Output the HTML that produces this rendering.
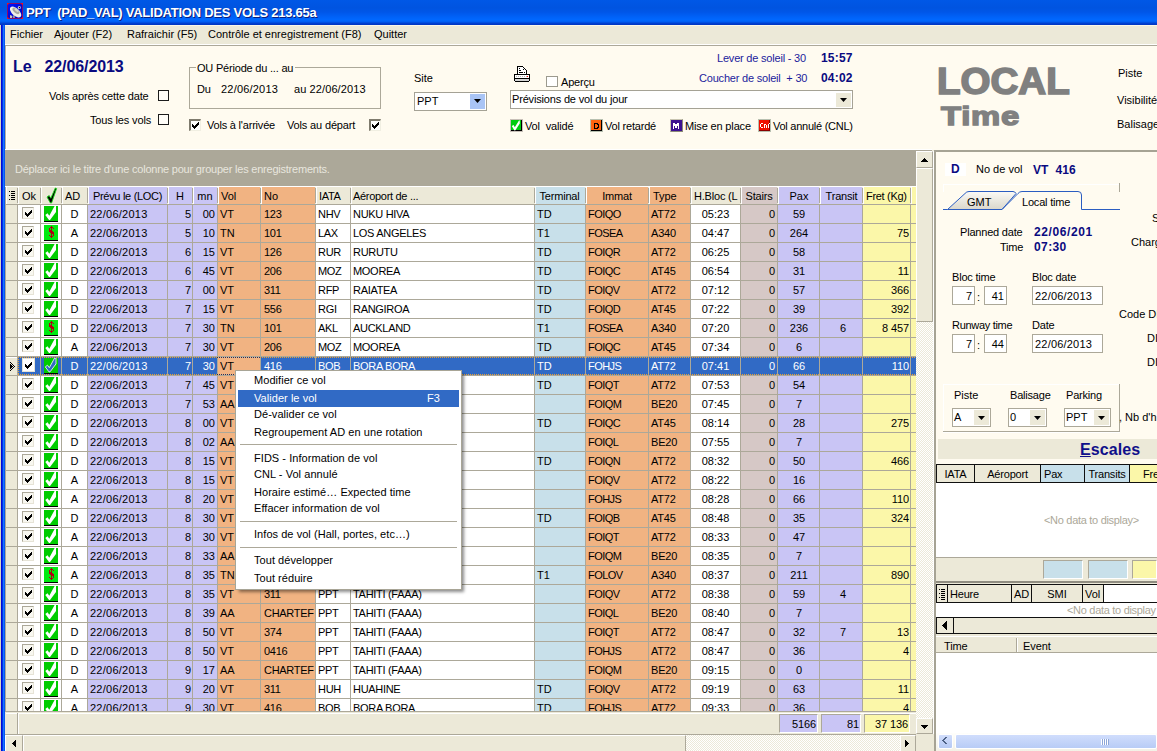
<!DOCTYPE html>
<html><head><meta charset="utf-8"><style>
html,body{margin:0;padding:0;}
body{width:1157px;height:751px;overflow:hidden;position:relative;background:#ECE9D8;font-family:"Liberation Sans",sans-serif;font-size:11px;}
body div{position:absolute;}
.t{white-space:pre;}
</style></head><body>
<div style="left:0px;top:0px;width:1157px;height:25px;background:linear-gradient(to bottom,#0058E6 0px,#0054E0 8px,#0056E8 12px,#0062F8 17px,#0068FF 20px,#005CF0 22px,#0042D4 23px,#0034C0 25px);"></div>
<svg style="position:absolute;left:7px;top:3px" width="16" height="16" viewBox="0 0 16 16"><rect x="0.5" y="0.5" width="15" height="15" fill="#0008E8" stroke="#8A0A6A"/><rect x="1" y="1" width="14" height="14" fill="url(#ig)"/><defs><linearGradient id="ig" x1="0" y1="0" x2="1" y2="1"><stop offset="0" stop-color="#0010FF"/><stop offset="1" stop-color="#0000B8"/></linearGradient></defs><path d="M3 12 L3 15 L5 15 L5.5 13 Z" fill="#C8C8C0"/><path d="M6 12.5 L6 15 L8 15 L7.5 12 Z" fill="#9A9A90"/><ellipse cx="8.6" cy="9" rx="6.9" ry="3.7" transform="rotate(43 8.6 9)" fill="#F0F0E8"/><ellipse cx="9" cy="7.8" rx="4.2" ry="2.2" transform="rotate(40 9 7.8)" fill="#A8A8A0"/><ellipse cx="9.6" cy="7.2" rx="2.6" ry="1.2" transform="rotate(40 9.6 7.2)" fill="#D8D8D0"/><circle cx="12.3" cy="4.5" r="1.5" fill="#E8E8F0"/><circle cx="12.5" cy="4.6" r="0.8" fill="#101010"/><rect x="0" y="0" width="1.5" height="1.5" fill="#FF1010"/><rect x="14.5" y="0" width="1.5" height="1.5" fill="#FF1010"/><rect x="0" y="14.5" width="1.5" height="1.5" fill="#FF1010"/><rect x="14.5" y="14.5" width="1.5" height="1.5" fill="#FF1010"/></svg>
<div class="t" style="left:26px;top:4.70px;font-size:13px;line-height:16px;color:#fff;font-weight:700;letter-spacing:-0.25px;text-shadow:1px 1px 0 #0A1E80;">PPT&nbsp;&nbsp;(PAD_VAL) VALIDATION DES VOLS 213.65a</div>
<div style="left:0px;top:25px;width:1px;height:726px;background:#D8D4C4;"></div>
<div style="left:1px;top:25px;width:1px;height:726px;background:#0008D8;"></div>
<div style="left:2px;top:25px;width:1px;height:726px;background:#0030E6;"></div>
<div style="left:3px;top:25px;width:1px;height:726px;background:#1874FF;"></div>
<div style="left:4px;top:25px;width:1px;height:726px;background:#0656F4;"></div>
<div style="left:5px;top:25px;width:1152px;height:19px;background:#ECE9D8;"></div>
<div style="left:5px;top:25px;width:1152px;height:1px;background:#FBF7E8;"></div>
<div style="left:5px;top:44px;width:1152px;height:1px;background:#FFFFFF;"></div>
<div style="left:5px;top:45px;width:1152px;height:1px;background:#ACA899;"></div>
<div class="t" style="left:10px;top:27.36px;font-size:11px;line-height:14px;color:#000;">Fichier</div>
<div class="t" style="left:54px;top:27.36px;font-size:11px;line-height:14px;color:#000;">Ajouter (F2)</div>
<div class="t" style="left:127px;top:27.36px;font-size:11px;line-height:14px;color:#000;">Rafraichir (F5)</div>
<div class="t" style="left:208px;top:27.36px;font-size:11px;line-height:14px;color:#000;">Contrôle et enregistrement (F8)</div>
<div class="t" style="left:374px;top:27.36px;font-size:11px;line-height:14px;color:#000;">Quitter</div>
<div style="left:5px;top:46px;width:1152px;height:104px;background:#FFFBF0;"></div>
<div style="left:5px;top:46px;width:1px;height:103px;background:#B8B29E;"></div>
<div style="left:6px;top:46px;width:1px;height:103px;background:#FFFFFF;"></div>
<div style="left:5px;top:149px;width:927px;height:1px;background:#FFFFFF;"></div>
<div style="left:5px;top:150px;width:927px;height:1px;background:#ACA899;"></div>
<div class="t" style="left:13px;top:56.71px;font-size:16px;line-height:20px;color:#0A0A80;font-weight:700;letter-spacing:-0.1px;">Le&nbsp;&nbsp;&nbsp;22/06/2013</div>
<div class="t" style="left:49px;top:89.36px;font-size:11px;line-height:14px;color:#000;letter-spacing:-0.15px;">Vols après cette date</div>
<div class="t" style="left:90px;top:113.36px;font-size:11px;line-height:14px;color:#000;letter-spacing:-0.15px;">Tous les vols</div>
<div style="left:158px;top:90px;width:11px;height:11px;border:1px solid #1C1C1C;background:#FFFDF8;box-sizing:border-box;"></div>
<div style="left:158px;top:114px;width:11px;height:11px;border:1px solid #1C1C1C;background:#FFFDF8;box-sizing:border-box;"></div>
<div style="left:189px;top:67px;width:192px;height:42px;border:1px solid #ACA899;box-sizing:border-box;"></div>
<div style="left:196px;top:62px;width:99px;height:10px;background:#FFFBF0;"></div>
<div class="t" style="left:197px;top:61.36px;font-size:11px;line-height:14px;color:#000;letter-spacing:-0.2px;">OU Période du ... au</div>
<div class="t" style="left:197px;top:82.36px;font-size:11px;line-height:14px;color:#000;letter-spacing:-0.1px;">Du</div>
<div class="t" style="left:221px;top:82.36px;font-size:11px;line-height:14px;color:#000;letter-spacing:0.2px;">22/06/2013</div>
<div class="t" style="left:294px;top:82.36px;font-size:11px;line-height:14px;color:#000;letter-spacing:0.1px;">au 22/06/2013</div>
<div style="left:189px;top:119px;width:12px;height:12px;background:#FFFFFF;border-top:2px solid #7F7B6E;border-left:2px solid #7F7B6E;border-right:1px solid #F1EFE2;border-bottom:1px solid #F1EFE2;box-sizing:border-box;"></div>
<svg style="position:absolute;left:192px;top:122px" width="7" height="7" shape-rendering="crispEdges" fill="#000"><rect x="6" y="0" width="1" height="1"/><rect x="5" y="1" width="2" height="1"/><rect x="0" y="2" width="1" height="1"/><rect x="4" y="2" width="3" height="1"/><rect x="0" y="3" width="2" height="1"/><rect x="3" y="3" width="3" height="1"/><rect x="0" y="4" width="5" height="1"/><rect x="1" y="5" width="3" height="1"/><rect x="2" y="6" width="1" height="1"/></svg>
<div class="t" style="left:207px;top:118.36px;font-size:11px;line-height:14px;color:#000;letter-spacing:-0.2px;">Vols à l'arrivée</div>
<div class="t" style="left:287px;top:118.36px;font-size:11px;line-height:14px;color:#000;letter-spacing:-0.15px;">Vols au départ</div>
<div style="left:369px;top:119px;width:12px;height:12px;background:#FFFFFF;border-top:2px solid #7F7B6E;border-left:2px solid #7F7B6E;border-right:1px solid #F1EFE2;border-bottom:1px solid #F1EFE2;box-sizing:border-box;"></div>
<svg style="position:absolute;left:372px;top:122px" width="7" height="7" shape-rendering="crispEdges" fill="#000"><rect x="6" y="0" width="1" height="1"/><rect x="5" y="1" width="2" height="1"/><rect x="0" y="2" width="1" height="1"/><rect x="4" y="2" width="3" height="1"/><rect x="0" y="3" width="2" height="1"/><rect x="3" y="3" width="3" height="1"/><rect x="0" y="4" width="5" height="1"/><rect x="1" y="5" width="3" height="1"/><rect x="2" y="6" width="1" height="1"/></svg>
<div class="t" style="left:414px;top:71.36px;font-size:11px;line-height:14px;color:#000;">Site</div>
<div style="left:414px;top:92px;width:73px;height:19px;border:1px solid #A5A295;background:#fff;box-sizing:border-box;"></div>
<div style="left:470px;top:94px;width:15px;height:15px;background:#A9C4F5;"></div>
<svg style="position:absolute;left:474px;top:99px" width="8" height="5"><path d="M0 0 H7 L3.5 4 Z" fill="#000"/></svg>
<div class="t" style="left:417px;top:94.36px;font-size:11px;line-height:14px;color:#000;">PPT</div>
<svg style="position:absolute;left:514px;top:66px" width="16" height="16" shape-rendering="crispEdges"><rect x="3" y="0" width="1" height="1" fill="#000"/><rect x="4" y="0" width="1" height="1" fill="#000"/><rect x="5" y="0" width="1" height="1" fill="#000"/><rect x="6" y="0" width="1" height="1" fill="#000"/><rect x="7" y="0" width="1" height="1" fill="#000"/><rect x="8" y="0" width="1" height="1" fill="#000"/><rect x="3" y="1" width="1" height="1" fill="#000"/><rect x="4" y="1" width="1" height="1" fill="#fff"/><rect x="5" y="1" width="1" height="1" fill="#fff"/><rect x="6" y="1" width="1" height="1" fill="#fff"/><rect x="7" y="1" width="1" height="1" fill="#fff"/><rect x="8" y="1" width="1" height="1" fill="#fff"/><rect x="9" y="1" width="1" height="1" fill="#000"/><rect x="3" y="2" width="1" height="1" fill="#000"/><rect x="4" y="2" width="1" height="1" fill="#fff"/><rect x="5" y="2" width="1" height="1" fill="#000"/><rect x="6" y="2" width="1" height="1" fill="#fff"/><rect x="7" y="2" width="1" height="1" fill="#fff"/><rect x="8" y="2" width="1" height="1" fill="#fff"/><rect x="9" y="2" width="1" height="1" fill="#fff"/><rect x="10" y="2" width="1" height="1" fill="#000"/><rect x="3" y="3" width="1" height="1" fill="#000"/><rect x="4" y="3" width="1" height="1" fill="#fff"/><rect x="5" y="3" width="1" height="1" fill="#fff"/><rect x="6" y="3" width="1" height="1" fill="#fff"/><rect x="7" y="3" width="1" height="1" fill="#fff"/><rect x="8" y="3" width="1" height="1" fill="#fff"/><rect x="9" y="3" width="1" height="1" fill="#000"/><rect x="10" y="3" width="1" height="1" fill="#fff"/><rect x="11" y="3" width="1" height="1" fill="#000"/><rect x="3" y="4" width="1" height="1" fill="#000"/><rect x="4" y="4" width="1" height="1" fill="#fff"/><rect x="5" y="4" width="1" height="1" fill="#000"/><rect x="6" y="4" width="1" height="1" fill="#000"/><rect x="7" y="4" width="1" height="1" fill="#fff"/><rect x="8" y="4" width="1" height="1" fill="#fff"/><rect x="9" y="4" width="1" height="1" fill="#fff"/><rect x="10" y="4" width="1" height="1" fill="#fff"/><rect x="11" y="4" width="1" height="1" fill="#fff"/><rect x="12" y="4" width="1" height="1" fill="#000"/><rect x="3" y="5" width="1" height="1" fill="#000"/><rect x="4" y="5" width="1" height="1" fill="#fff"/><rect x="5" y="5" width="1" height="1" fill="#fff"/><rect x="6" y="5" width="1" height="1" fill="#fff"/><rect x="7" y="5" width="1" height="1" fill="#fff"/><rect x="8" y="5" width="1" height="1" fill="#fff"/><rect x="9" y="5" width="1" height="1" fill="#fff"/><rect x="10" y="5" width="1" height="1" fill="#fff"/><rect x="11" y="5" width="1" height="1" fill="#fff"/><rect x="12" y="5" width="1" height="1" fill="#000"/><rect x="3" y="6" width="1" height="1" fill="#000"/><rect x="4" y="6" width="1" height="1" fill="#fff"/><rect x="5" y="6" width="1" height="1" fill="#000"/><rect x="6" y="6" width="1" height="1" fill="#000"/><rect x="7" y="6" width="1" height="1" fill="#000"/><rect x="8" y="6" width="1" height="1" fill="#000"/><rect x="9" y="6" width="1" height="1" fill="#fff"/><rect x="10" y="6" width="1" height="1" fill="#000"/><rect x="11" y="6" width="1" height="1" fill="#fff"/><rect x="12" y="6" width="1" height="1" fill="#000"/><rect x="3" y="7" width="1" height="1" fill="#000"/><rect x="4" y="7" width="1" height="1" fill="#fff"/><rect x="5" y="7" width="1" height="1" fill="#fff"/><rect x="6" y="7" width="1" height="1" fill="#fff"/><rect x="7" y="7" width="1" height="1" fill="#fff"/><rect x="8" y="7" width="1" height="1" fill="#fff"/><rect x="9" y="7" width="1" height="1" fill="#fff"/><rect x="10" y="7" width="1" height="1" fill="#fff"/><rect x="11" y="7" width="1" height="1" fill="#fff"/><rect x="12" y="7" width="1" height="1" fill="#000"/><rect x="0" y="8" width="1" height="1" fill="#000"/><rect x="1" y="8" width="1" height="1" fill="#000"/><rect x="2" y="8" width="1" height="1" fill="#000"/><rect x="3" y="8" width="1" height="1" fill="#000"/><rect x="4" y="8" width="1" height="1" fill="#000"/><rect x="5" y="8" width="1" height="1" fill="#000"/><rect x="6" y="8" width="1" height="1" fill="#000"/><rect x="7" y="8" width="1" height="1" fill="#000"/><rect x="8" y="8" width="1" height="1" fill="#000"/><rect x="9" y="8" width="1" height="1" fill="#000"/><rect x="10" y="8" width="1" height="1" fill="#000"/><rect x="11" y="8" width="1" height="1" fill="#000"/><rect x="12" y="8" width="1" height="1" fill="#000"/><rect x="13" y="8" width="1" height="1" fill="#000"/><rect x="14" y="8" width="1" height="1" fill="#000"/><rect x="15" y="8" width="1" height="1" fill="#000"/><rect x="0" y="9" width="1" height="1" fill="#000"/><rect x="1" y="9" width="1" height="1" fill="#fff"/><rect x="2" y="9" width="1" height="1" fill="#fff"/><rect x="3" y="9" width="1" height="1" fill="#fff"/><rect x="4" y="9" width="1" height="1" fill="#fff"/><rect x="5" y="9" width="1" height="1" fill="#fff"/><rect x="6" y="9" width="1" height="1" fill="#fff"/><rect x="7" y="9" width="1" height="1" fill="#fff"/><rect x="8" y="9" width="1" height="1" fill="#fff"/><rect x="9" y="9" width="1" height="1" fill="#fff"/><rect x="10" y="9" width="1" height="1" fill="#fff"/><rect x="11" y="9" width="1" height="1" fill="#fff"/><rect x="12" y="9" width="1" height="1" fill="#fff"/><rect x="13" y="9" width="1" height="1" fill="#fff"/><rect x="14" y="9" width="1" height="1" fill="#fff"/><rect x="15" y="9" width="1" height="1" fill="#000"/><rect x="0" y="10" width="1" height="1" fill="#000"/><rect x="1" y="10" width="1" height="1" fill="#fff"/><rect x="2" y="10" width="1" height="1" fill="#B8B8B8"/><rect x="3" y="10" width="1" height="1" fill="#fff"/><rect x="4" y="10" width="1" height="1" fill="#B8B8B8"/><rect x="5" y="10" width="1" height="1" fill="#fff"/><rect x="6" y="10" width="1" height="1" fill="#B8B8B8"/><rect x="7" y="10" width="1" height="1" fill="#fff"/><rect x="8" y="10" width="1" height="1" fill="#B8B8B8"/><rect x="9" y="10" width="1" height="1" fill="#fff"/><rect x="10" y="10" width="1" height="1" fill="#B8B8B8"/><rect x="11" y="10" width="1" height="1" fill="#fff"/><rect x="12" y="10" width="1" height="1" fill="#B8B8B8"/><rect x="13" y="10" width="1" height="1" fill="#FF0000"/><rect x="14" y="10" width="1" height="1" fill="#fff"/><rect x="15" y="10" width="1" height="1" fill="#000"/><rect x="0" y="11" width="1" height="1" fill="#000"/><rect x="1" y="11" width="1" height="1" fill="#fff"/><rect x="2" y="11" width="1" height="1" fill="#fff"/><rect x="3" y="11" width="1" height="1" fill="#fff"/><rect x="4" y="11" width="1" height="1" fill="#fff"/><rect x="5" y="11" width="1" height="1" fill="#fff"/><rect x="6" y="11" width="1" height="1" fill="#fff"/><rect x="7" y="11" width="1" height="1" fill="#fff"/><rect x="8" y="11" width="1" height="1" fill="#fff"/><rect x="9" y="11" width="1" height="1" fill="#fff"/><rect x="10" y="11" width="1" height="1" fill="#fff"/><rect x="11" y="11" width="1" height="1" fill="#fff"/><rect x="12" y="11" width="1" height="1" fill="#fff"/><rect x="13" y="11" width="1" height="1" fill="#fff"/><rect x="14" y="11" width="1" height="1" fill="#fff"/><rect x="15" y="11" width="1" height="1" fill="#000"/><rect x="0" y="12" width="1" height="1" fill="#000"/><rect x="1" y="12" width="1" height="1" fill="#000"/><rect x="2" y="12" width="1" height="1" fill="#000"/><rect x="3" y="12" width="1" height="1" fill="#000"/><rect x="4" y="12" width="1" height="1" fill="#000"/><rect x="5" y="12" width="1" height="1" fill="#000"/><rect x="6" y="12" width="1" height="1" fill="#000"/><rect x="7" y="12" width="1" height="1" fill="#000"/><rect x="8" y="12" width="1" height="1" fill="#000"/><rect x="9" y="12" width="1" height="1" fill="#000"/><rect x="10" y="12" width="1" height="1" fill="#000"/><rect x="11" y="12" width="1" height="1" fill="#000"/><rect x="12" y="12" width="1" height="1" fill="#000"/><rect x="13" y="12" width="1" height="1" fill="#000"/><rect x="14" y="12" width="1" height="1" fill="#000"/><rect x="15" y="12" width="1" height="1" fill="#000"/><rect x="0" y="13" width="1" height="1" fill="#000"/><rect x="1" y="13" width="1" height="1" fill="#D4D4D4"/><rect x="2" y="13" width="1" height="1" fill="#D4D4D4"/><rect x="3" y="13" width="1" height="1" fill="#D4D4D4"/><rect x="4" y="13" width="1" height="1" fill="#D4D4D4"/><rect x="5" y="13" width="1" height="1" fill="#D4D4D4"/><rect x="6" y="13" width="1" height="1" fill="#D4D4D4"/><rect x="7" y="13" width="1" height="1" fill="#D4D4D4"/><rect x="8" y="13" width="1" height="1" fill="#D4D4D4"/><rect x="9" y="13" width="1" height="1" fill="#D4D4D4"/><rect x="10" y="13" width="1" height="1" fill="#D4D4D4"/><rect x="11" y="13" width="1" height="1" fill="#D4D4D4"/><rect x="12" y="13" width="1" height="1" fill="#D4D4D4"/><rect x="13" y="13" width="1" height="1" fill="#D4D4D4"/><rect x="14" y="13" width="1" height="1" fill="#D4D4D4"/><rect x="15" y="13" width="1" height="1" fill="#000"/><rect x="0" y="14" width="1" height="1" fill="#000"/><rect x="1" y="14" width="1" height="1" fill="#D4D4D4"/><rect x="2" y="14" width="1" height="1" fill="#D4D4D4"/><rect x="3" y="14" width="1" height="1" fill="#D4D4D4"/><rect x="4" y="14" width="1" height="1" fill="#D4D4D4"/><rect x="5" y="14" width="1" height="1" fill="#D4D4D4"/><rect x="6" y="14" width="1" height="1" fill="#D4D4D4"/><rect x="7" y="14" width="1" height="1" fill="#D4D4D4"/><rect x="8" y="14" width="1" height="1" fill="#D4D4D4"/><rect x="9" y="14" width="1" height="1" fill="#D4D4D4"/><rect x="10" y="14" width="1" height="1" fill="#D4D4D4"/><rect x="11" y="14" width="1" height="1" fill="#D4D4D4"/><rect x="12" y="14" width="1" height="1" fill="#D4D4D4"/><rect x="13" y="14" width="1" height="1" fill="#D4D4D4"/><rect x="14" y="14" width="1" height="1" fill="#D4D4D4"/><rect x="15" y="14" width="1" height="1" fill="#000"/><rect x="1" y="15" width="1" height="1" fill="#000"/><rect x="2" y="15" width="1" height="1" fill="#000"/><rect x="3" y="15" width="1" height="1" fill="#000"/><rect x="4" y="15" width="1" height="1" fill="#000"/><rect x="5" y="15" width="1" height="1" fill="#000"/><rect x="6" y="15" width="1" height="1" fill="#000"/><rect x="7" y="15" width="1" height="1" fill="#000"/><rect x="8" y="15" width="1" height="1" fill="#000"/><rect x="9" y="15" width="1" height="1" fill="#000"/><rect x="10" y="15" width="1" height="1" fill="#000"/><rect x="11" y="15" width="1" height="1" fill="#000"/><rect x="12" y="15" width="1" height="1" fill="#000"/><rect x="13" y="15" width="1" height="1" fill="#000"/><rect x="14" y="15" width="1" height="1" fill="#000"/></svg>
<div style="left:546px;top:76px;width:12px;height:11px;border:1px solid #9C9A8E;background:#fff;box-sizing:border-box;"></div>
<div class="t" style="left:561px;top:75.36px;font-size:11px;line-height:14px;color:#000;letter-spacing:-0.2px;">Aperçu</div>
<div style="left:510px;top:90px;width:343px;height:19px;border:1px solid #A5A295;background:#fff;box-sizing:border-box;"></div>
<div style="left:836px;top:93px;width:15px;height:14px;background:#ECE9D8;"></div>
<svg style="position:absolute;left:840px;top:98px" width="8" height="5"><path d="M0 0 H7 L3.5 4 Z" fill="#000"/></svg>
<div class="t" style="left:512px;top:92.36px;font-size:11px;line-height:14px;color:#000;letter-spacing:-0.17px;">Prévisions de vol du jour</div>
<div class="t" style="left:717px;top:51.36px;font-size:11px;line-height:14px;color:#1C1C9C;letter-spacing:-0.2px;">Lever de soleil - 30</div>
<div class="t" style="left:699px;top:71.36px;font-size:11px;line-height:14px;color:#1C1C9C;letter-spacing:-0.2px;">Coucher de soleil&nbsp;&nbsp;+ 30</div>
<div class="t" style="left:821px;top:50.53px;font-size:12px;line-height:15px;color:#0A0A80;font-weight:700;letter-spacing:0.2px;">15:57</div>
<div class="t" style="left:821px;top:70.53px;font-size:12px;line-height:15px;color:#0A0A80;font-weight:700;letter-spacing:0.2px;">04:02</div>
<div style="left:510px;top:119px;width:13px;height:13px;background:#000;border:1px solid #C8C0B8;box-sizing:border-box;"></div>
<div style="left:511px;top:120px;width:10px;height:10px;background:#00CC10;"></div>
<svg style="position:absolute;left:511px;top:120px" width="11" height="11" viewBox="0 0 11 11"><polygon points="0.8,6 2.6,5 3.8,7.2 8,0.5 8.8,0.5 8.8,3.5 4.2,10.5 3.4,10.5" fill="#fff"/></svg>
<div class="t" style="left:525px;top:119.36px;font-size:11px;line-height:14px;color:#000;letter-spacing:-0.15px;">Vol&nbsp;&nbsp;validé</div>
<div style="left:590px;top:119px;width:13px;height:13px;background:#000;border:1px solid #B8C0B0;box-sizing:border-box;"></div>
<div style="left:591px;top:120px;width:10px;height:10px;background:#FF6410;"></div>
<svg style="position:absolute;left:594px;top:123px" width="5" height="6" shape-rendering="crispEdges" fill="#000"><rect x="0" y="0" width="4" height="1"/><rect x="0" y="1" width="1" height="1"/><rect x="3" y="1" width="2" height="1"/><rect x="0" y="2" width="1" height="1"/><rect x="4" y="2" width="1" height="1"/><rect x="0" y="3" width="1" height="1"/><rect x="4" y="3" width="1" height="1"/><rect x="0" y="4" width="1" height="1"/><rect x="3" y="4" width="2" height="1"/><rect x="0" y="5" width="4" height="1"/></svg>
<div class="t" style="left:605px;top:119.36px;font-size:11px;line-height:14px;color:#000;letter-spacing:-0.2px;">Vol retardé</div>
<div style="left:670px;top:119px;width:13px;height:13px;background:#3C1290;border-top:1px solid #C8C4B0;border-left:1px solid #C8C4B0;border-right:1px solid #8C8A78;border-bottom:1px solid #8C8A78;box-sizing:border-box;"></div>
<svg style="position:absolute;left:673px;top:123px" width="6" height="6" shape-rendering="crispEdges" fill="#FFFFFF"><rect x="0" y="0" width="2" height="1"/><rect x="4" y="0" width="2" height="1"/><rect x="0" y="1" width="6" height="1"/><rect x="0" y="2" width="6" height="1"/><rect x="0" y="3" width="1" height="1"/><rect x="2" y="3" width="2" height="1"/><rect x="5" y="3" width="1" height="1"/><rect x="0" y="4" width="1" height="1"/><rect x="2" y="4" width="2" height="1"/><rect x="5" y="4" width="1" height="1"/><rect x="0" y="5" width="1" height="1"/><rect x="5" y="5" width="1" height="1"/></svg>
<div class="t" style="left:685px;top:119.36px;font-size:11px;line-height:14px;color:#000;letter-spacing:-0.15px;">Mise en place</div>
<div style="left:758px;top:119px;width:13px;height:13px;background:#8A0000;border:1px solid #B8C0B0;box-sizing:border-box;"></div>
<div style="left:759px;top:120px;width:10px;height:10px;background:#F01000;"></div>
<svg style="position:absolute;left:760px;top:123px" width="10" height="5" shape-rendering="crispEdges" fill="#FFFFFF"><rect x="1" y="0" width="2" height="1"/><rect x="9" y="0" width="1" height="1"/><rect x="0" y="1" width="1" height="1"/><rect x="4" y="1" width="2" height="1"/><rect x="8" y="1" width="1" height="1"/><rect x="0" y="2" width="1" height="1"/><rect x="4" y="2" width="1" height="1"/><rect x="6" y="2" width="1" height="1"/><rect x="8" y="2" width="1" height="1"/><rect x="0" y="3" width="1" height="1"/><rect x="4" y="3" width="1" height="1"/><rect x="6" y="3" width="1" height="1"/><rect x="8" y="3" width="1" height="1"/><rect x="1" y="4" width="2" height="1"/><rect x="4" y="4" width="1" height="1"/><rect x="6" y="4" width="1" height="1"/><rect x="8" y="4" width="1" height="1"/></svg>
<div class="t" style="left:773px;top:119.36px;font-size:11px;line-height:14px;color:#000;letter-spacing:-0.25px;">Vol annulé (CNL)</div>
<div class="t" style="left:937px;top:59.10px;font-size:36px;line-height:45px;color:#808080;font-weight:700;letter-spacing:0.0px;-webkit-text-stroke:1.6px #808080;transform:scaleX(1.07);transform-origin:0 0;">LOCAL</div>
<div class="t" style="left:941px;top:99.91px;font-size:26px;line-height:32px;color:#808080;font-weight:700;letter-spacing:0.6px;-webkit-text-stroke:1.4px #808080;transform:scaleX(1.26);transform-origin:0 0;">Time</div>
<div class="t" style="left:1118px;top:66.36px;font-size:11px;line-height:14px;color:#000;">Piste</div>
<div class="t" style="left:1117px;top:93.36px;font-size:11px;line-height:14px;color:#000;">Visibilité</div>
<div class="t" style="left:1117px;top:117.36px;font-size:11px;line-height:14px;color:#000;">Balisage</div>
<div style="left:5px;top:151px;width:911px;height:35px;background:#ACA899;"></div>
<div class="t" style="left:15px;top:162.36px;font-size:11px;line-height:14px;color:#E8E6DE;letter-spacing:-0.22px;">Déplacer ici le titre d'une colonne pour grouper les enregistrements.</div>
<div style="left:5px;top:186px;width:911px;height:1px;background:#FFFFFF;"></div>
<div style="left:5px;top:187px;width:1px;height:525px;background:#ACA899;"></div>
<div style="left:6px;top:187px;width:11px;height:17px;background:#ECE9D8;"></div>
<div style="left:6px;top:187px;width:1px;height:17px;background:#FFFFFF;"></div>
<div style="left:17px;top:188px;width:1px;height:15px;background:#ACA899;"></div>
<div style="left:18px;top:187px;width:22px;height:17px;background:#ECE9D8;"></div>
<div style="left:18px;top:187px;width:1px;height:17px;background:#FFFFFF;"></div>
<div style="left:40px;top:188px;width:1px;height:15px;background:#ACA899;"></div>
<div style="left:41px;top:187px;width:20px;height:17px;background:#ECE9D8;"></div>
<div style="left:41px;top:187px;width:1px;height:17px;background:#FFFFFF;"></div>
<div style="left:61px;top:188px;width:1px;height:15px;background:#ACA899;"></div>
<div style="left:62px;top:187px;width:25px;height:17px;background:#ECE9D8;"></div>
<div style="left:62px;top:187px;width:1px;height:17px;background:#FFFFFF;"></div>
<div style="left:87px;top:188px;width:1px;height:15px;background:#ACA899;"></div>
<div style="left:88px;top:187px;width:79px;height:17px;background:#C9C5F5;"></div>
<div style="left:88px;top:187px;width:1px;height:17px;background:#FFFFFF;"></div>
<div style="left:167px;top:188px;width:1px;height:15px;background:#ACA899;"></div>
<div style="left:168px;top:187px;width:24px;height:17px;background:#C9C5F5;"></div>
<div style="left:168px;top:187px;width:1px;height:17px;background:#FFFFFF;"></div>
<div style="left:192px;top:188px;width:1px;height:15px;background:#ACA899;"></div>
<div style="left:193px;top:187px;width:24px;height:17px;background:#C9C5F5;"></div>
<div style="left:193px;top:187px;width:1px;height:17px;background:#FFFFFF;"></div>
<div style="left:217px;top:188px;width:1px;height:15px;background:#ACA899;"></div>
<div style="left:218px;top:187px;width:42px;height:17px;background:#F1B382;"></div>
<div style="left:218px;top:187px;width:1px;height:17px;background:#FFFFFF;"></div>
<div style="left:260px;top:188px;width:1px;height:15px;background:#ACA899;"></div>
<div style="left:261px;top:187px;width:54px;height:17px;background:#F1B382;"></div>
<div style="left:261px;top:187px;width:1px;height:17px;background:#FFFFFF;"></div>
<div style="left:315px;top:188px;width:1px;height:15px;background:#ACA899;"></div>
<div style="left:316px;top:187px;width:34px;height:17px;background:#ECE9D8;"></div>
<div style="left:316px;top:187px;width:1px;height:17px;background:#FFFFFF;"></div>
<div style="left:350px;top:188px;width:1px;height:15px;background:#ACA899;"></div>
<div style="left:351px;top:187px;width:183px;height:17px;background:#ECE9D8;"></div>
<div style="left:351px;top:187px;width:1px;height:17px;background:#FFFFFF;"></div>
<div style="left:534px;top:188px;width:1px;height:15px;background:#ACA899;"></div>
<div style="left:535px;top:187px;width:50px;height:17px;background:#C8E0EA;"></div>
<div style="left:535px;top:187px;width:1px;height:17px;background:#FFFFFF;"></div>
<div style="left:585px;top:188px;width:1px;height:15px;background:#ACA899;"></div>
<div style="left:586px;top:187px;width:62px;height:17px;background:#F1B382;"></div>
<div style="left:586px;top:187px;width:1px;height:17px;background:#FFFFFF;"></div>
<div style="left:648px;top:188px;width:1px;height:15px;background:#ACA899;"></div>
<div style="left:649px;top:187px;width:41px;height:17px;background:#F1B382;"></div>
<div style="left:649px;top:187px;width:1px;height:17px;background:#FFFFFF;"></div>
<div style="left:690px;top:188px;width:1px;height:15px;background:#ACA899;"></div>
<div style="left:691px;top:187px;width:49px;height:17px;background:#ECE9D8;"></div>
<div style="left:691px;top:187px;width:1px;height:17px;background:#FFFFFF;"></div>
<div style="left:740px;top:188px;width:1px;height:15px;background:#ACA899;"></div>
<div style="left:741px;top:187px;width:36px;height:17px;background:#D6C8C6;"></div>
<div style="left:741px;top:187px;width:1px;height:17px;background:#FFFFFF;"></div>
<div style="left:777px;top:188px;width:1px;height:15px;background:#ACA899;"></div>
<div style="left:778px;top:187px;width:41px;height:17px;background:#C9C5F5;"></div>
<div style="left:778px;top:187px;width:1px;height:17px;background:#FFFFFF;"></div>
<div style="left:819px;top:188px;width:1px;height:15px;background:#ACA899;"></div>
<div style="left:820px;top:187px;width:42px;height:17px;background:#C9C5F5;"></div>
<div style="left:820px;top:187px;width:1px;height:17px;background:#FFFFFF;"></div>
<div style="left:862px;top:188px;width:1px;height:15px;background:#ACA899;"></div>
<div style="left:863px;top:187px;width:47px;height:17px;background:#FBF7A9;"></div>
<div style="left:863px;top:187px;width:1px;height:17px;background:#FFFFFF;"></div>
<div style="left:910px;top:188px;width:1px;height:15px;background:#ACA899;"></div>
<div style="left:911px;top:187px;width:5px;height:17px;background:#FBF7A9;"></div>
<div style="left:911px;top:187px;width:1px;height:17px;background:#FFFFFF;"></div>
<div style="left:6px;top:204px;width:910px;height:1px;background:#ACA899;"></div>
<div style="left:6px;top:205px;width:11px;height:506px;background:#ECE9D8;"></div>
<div style="left:18px;top:205px;width:22px;height:506px;background:#fff;"></div>
<div style="left:41px;top:205px;width:20px;height:506px;background:#fff;"></div>
<div style="left:62px;top:205px;width:25px;height:506px;background:#fff;"></div>
<div style="left:88px;top:205px;width:79px;height:506px;background:#C9C5F5;"></div>
<div style="left:168px;top:205px;width:24px;height:506px;background:#C9C5F5;"></div>
<div style="left:193px;top:205px;width:24px;height:506px;background:#C9C5F5;"></div>
<div style="left:218px;top:205px;width:42px;height:506px;background:#F1B382;"></div>
<div style="left:261px;top:205px;width:54px;height:506px;background:#F1B382;"></div>
<div style="left:316px;top:205px;width:34px;height:506px;background:#fff;"></div>
<div style="left:351px;top:205px;width:183px;height:506px;background:#fff;"></div>
<div style="left:535px;top:205px;width:50px;height:506px;background:#C8E0EA;"></div>
<div style="left:586px;top:205px;width:62px;height:506px;background:#F1B382;"></div>
<div style="left:649px;top:205px;width:41px;height:506px;background:#F1B382;"></div>
<div style="left:691px;top:205px;width:49px;height:506px;background:#fff;"></div>
<div style="left:741px;top:205px;width:36px;height:506px;background:#D6C8C6;"></div>
<div style="left:778px;top:205px;width:41px;height:506px;background:#C9C5F5;"></div>
<div style="left:820px;top:205px;width:42px;height:506px;background:#C9C5F5;"></div>
<div style="left:863px;top:205px;width:47px;height:506px;background:#FBF7A9;"></div>
<div style="left:911px;top:205px;width:5px;height:506px;background:#FBF7A9;"></div>
<div style="left:18px;top:357px;width:22px;height:18px;background:#316AC5;"></div>
<div style="left:41px;top:357px;width:20px;height:18px;background:#316AC5;"></div>
<div style="left:62px;top:357px;width:25px;height:18px;background:#316AC5;"></div>
<div style="left:88px;top:357px;width:79px;height:18px;background:#316AC5;"></div>
<div style="left:168px;top:357px;width:24px;height:18px;background:#316AC5;"></div>
<div style="left:193px;top:357px;width:24px;height:18px;background:#316AC5;"></div>
<div style="left:261px;top:357px;width:54px;height:18px;background:#316AC5;"></div>
<div style="left:316px;top:357px;width:34px;height:18px;background:#316AC5;"></div>
<div style="left:351px;top:357px;width:183px;height:18px;background:#316AC5;"></div>
<div style="left:535px;top:357px;width:50px;height:18px;background:#316AC5;"></div>
<div style="left:586px;top:357px;width:62px;height:18px;background:#316AC5;"></div>
<div style="left:649px;top:357px;width:41px;height:18px;background:#316AC5;"></div>
<div style="left:691px;top:357px;width:49px;height:18px;background:#316AC5;"></div>
<div style="left:741px;top:357px;width:36px;height:18px;background:#316AC5;"></div>
<div style="left:778px;top:357px;width:41px;height:18px;background:#316AC5;"></div>
<div style="left:820px;top:357px;width:42px;height:18px;background:#316AC5;"></div>
<div style="left:863px;top:357px;width:47px;height:18px;background:#316AC5;"></div>
<div style="left:911px;top:357px;width:5px;height:18px;background:#316AC5;"></div>
<div style="left:6px;top:223px;width:910px;height:1px;background:#ACA899;"></div>
<div style="left:6px;top:242px;width:910px;height:1px;background:#ACA899;"></div>
<div style="left:6px;top:261px;width:910px;height:1px;background:#ACA899;"></div>
<div style="left:6px;top:280px;width:910px;height:1px;background:#ACA899;"></div>
<div style="left:6px;top:299px;width:910px;height:1px;background:#ACA899;"></div>
<div style="left:6px;top:318px;width:910px;height:1px;background:#ACA899;"></div>
<div style="left:6px;top:337px;width:910px;height:1px;background:#ACA899;"></div>
<div style="left:6px;top:356px;width:910px;height:1px;background:#ACA899;"></div>
<div style="left:6px;top:375px;width:910px;height:1px;background:#ACA899;"></div>
<div style="left:6px;top:394px;width:910px;height:1px;background:#ACA899;"></div>
<div style="left:6px;top:413px;width:910px;height:1px;background:#ACA899;"></div>
<div style="left:6px;top:432px;width:910px;height:1px;background:#ACA899;"></div>
<div style="left:6px;top:451px;width:910px;height:1px;background:#ACA899;"></div>
<div style="left:6px;top:470px;width:910px;height:1px;background:#ACA899;"></div>
<div style="left:6px;top:489px;width:910px;height:1px;background:#ACA899;"></div>
<div style="left:6px;top:508px;width:910px;height:1px;background:#ACA899;"></div>
<div style="left:6px;top:527px;width:910px;height:1px;background:#ACA899;"></div>
<div style="left:6px;top:546px;width:910px;height:1px;background:#ACA899;"></div>
<div style="left:6px;top:565px;width:910px;height:1px;background:#ACA899;"></div>
<div style="left:6px;top:584px;width:910px;height:1px;background:#ACA899;"></div>
<div style="left:6px;top:603px;width:910px;height:1px;background:#ACA899;"></div>
<div style="left:6px;top:622px;width:910px;height:1px;background:#ACA899;"></div>
<div style="left:6px;top:641px;width:910px;height:1px;background:#ACA899;"></div>
<div style="left:6px;top:660px;width:910px;height:1px;background:#ACA899;"></div>
<div style="left:6px;top:679px;width:910px;height:1px;background:#ACA899;"></div>
<div style="left:6px;top:698px;width:910px;height:1px;background:#ACA899;"></div>
<div style="left:17px;top:205px;width:1px;height:506px;background:#ACA899;"></div>
<div style="left:40px;top:205px;width:1px;height:506px;background:#ACA899;"></div>
<div style="left:61px;top:205px;width:1px;height:506px;background:#ACA899;"></div>
<div style="left:87px;top:205px;width:1px;height:506px;background:#ACA899;"></div>
<div style="left:167px;top:205px;width:1px;height:506px;background:#ACA899;"></div>
<div style="left:192px;top:205px;width:1px;height:506px;background:#ACA899;"></div>
<div style="left:217px;top:205px;width:1px;height:506px;background:#ACA899;"></div>
<div style="left:260px;top:205px;width:1px;height:506px;background:#ACA899;"></div>
<div style="left:315px;top:205px;width:1px;height:506px;background:#ACA899;"></div>
<div style="left:350px;top:205px;width:1px;height:506px;background:#ACA899;"></div>
<div style="left:534px;top:205px;width:1px;height:506px;background:#ACA899;"></div>
<div style="left:585px;top:205px;width:1px;height:506px;background:#ACA899;"></div>
<div style="left:648px;top:205px;width:1px;height:506px;background:#ACA899;"></div>
<div style="left:690px;top:205px;width:1px;height:506px;background:#ACA899;"></div>
<div style="left:740px;top:205px;width:1px;height:506px;background:#ACA899;"></div>
<div style="left:777px;top:205px;width:1px;height:506px;background:#ACA899;"></div>
<div style="left:819px;top:205px;width:1px;height:506px;background:#ACA899;"></div>
<div style="left:862px;top:205px;width:1px;height:506px;background:#ACA899;"></div>
<div style="left:910px;top:205px;width:1px;height:506px;background:#ACA899;"></div>
<div style="left:18px;top:357px;width:199px;height:1px;background:repeating-linear-gradient(to right,#E8A038 0px,#E8A038 1px,transparent 1px,transparent 2px);"></div>
<div style="left:18px;top:374px;width:199px;height:1px;background:repeating-linear-gradient(to right,#E8A038 0px,#E8A038 1px,transparent 1px,transparent 2px);"></div>
<div style="left:217px;top:357px;width:43px;height:1px;background:repeating-linear-gradient(to right,#203060 0px,#203060 1px,transparent 1px,transparent 2px);"></div>
<div style="left:217px;top:374px;width:43px;height:1px;background:repeating-linear-gradient(to right,#203060 0px,#203060 1px,transparent 1px,transparent 2px);"></div>
<div style="left:260px;top:357px;width:656px;height:1px;background:repeating-linear-gradient(to right,#E8A038 0px,#E8A038 1px,transparent 1px,transparent 2px);"></div>
<div style="left:260px;top:374px;width:656px;height:1px;background:repeating-linear-gradient(to right,#E8A038 0px,#E8A038 1px,transparent 1px,transparent 2px);"></div>
<div style="left:18px;top:357px;width:1px;height:18px;background:repeating-linear-gradient(to bottom,#E8A038 0px,#E8A038 1px,transparent 1px,transparent 2px);"></div>
<div style="left:6px;top:357px;width:11px;height:1px;background:#fff;"></div>
<div style="left:22px;top:207px;width:12px;height:12px;background:#F8F7F0;border-top:1px solid #ACA899;border-left:1px solid #ACA899;border-right:1px solid #E6E3D6;border-bottom:1px solid #E6E3D6;box-sizing:border-box;"></div>
<svg style="position:absolute;left:25px;top:210px" width="7" height="7" shape-rendering="crispEdges" fill="#000"><rect x="6" y="0" width="1" height="1"/><rect x="5" y="1" width="2" height="1"/><rect x="0" y="2" width="1" height="1"/><rect x="4" y="2" width="3" height="1"/><rect x="0" y="3" width="2" height="1"/><rect x="3" y="3" width="3" height="1"/><rect x="0" y="4" width="5" height="1"/><rect x="1" y="5" width="3" height="1"/><rect x="2" y="6" width="1" height="1"/></svg>
<div style="left:44px;top:206px;width:14px;height:15px;background:#00CC00;"></div>
<div style="left:44px;top:221px;width:14px;height:1px;background:#000;"></div>
<svg style="position:absolute;left:44px;top:206px" width="14" height="15" viewBox="0 0 14 15"><polygon points="1.3,8.9 3.5,7.2 5.3,9.7 10.6,0 12,0 12,5.9 6,13.9 5,13.9" fill="#fff"/></svg>
<div class="t" style="left:62px;top:207.36px;font-size:11px;line-height:14px;color:#000;width:25px;text-align:center;">D</div>
<div class="t" style="left:90px;top:207.36px;font-size:11px;line-height:14px;color:#000;letter-spacing:0.25px;">22/06/2013</div>
<div class="t" style="left:168px;top:207.36px;font-size:11px;line-height:14px;color:#000;width:23px;text-align:right;">5</div>
<div class="t" style="left:193px;top:207.36px;font-size:11px;line-height:14px;color:#000;width:22px;text-align:right;">00</div>
<div class="t" style="left:220px;top:207.36px;font-size:11px;line-height:14px;color:#000;">VT</div>
<div class="t" style="left:264px;top:207.36px;font-size:11px;line-height:14px;color:#000;letter-spacing:-0.3px;">123</div>
<div class="t" style="left:318px;top:207.36px;font-size:11px;line-height:14px;color:#000;letter-spacing:-0.3px;">NHV</div>
<div class="t" style="left:353px;top:207.36px;font-size:11px;line-height:14px;color:#000;letter-spacing:-0.3px;">NUKU HIVA</div>
<div class="t" style="left:537px;top:207.36px;font-size:11px;line-height:14px;color:#000;">TD</div>
<div class="t" style="left:588px;top:207.36px;font-size:11px;line-height:14px;color:#000;letter-spacing:-0.55px;">FOIQO</div>
<div class="t" style="left:651px;top:207.36px;font-size:11px;line-height:14px;color:#000;letter-spacing:-0.2px;">AT72</div>
<div class="t" style="left:691px;top:207.36px;font-size:11px;line-height:14px;color:#000;width:49px;text-align:center;">05:23</div>
<div class="t" style="left:741px;top:207.36px;font-size:11px;line-height:14px;color:#000;width:34px;text-align:right;">0</div>
<div class="t" style="left:778px;top:207.36px;font-size:11px;line-height:14px;color:#000;width:42px;text-align:center;">59</div>
<div class="t" style="left:821px;top:207.36px;font-size:11px;line-height:14px;color:#000;width:44px;text-align:center;"></div>
<div class="t" style="left:863px;top:207.36px;font-size:11px;line-height:14px;color:#000;width:46px;text-align:right;letter-spacing:-0.1px;"></div>
<div style="left:22px;top:226px;width:12px;height:12px;background:#F8F7F0;border-top:1px solid #ACA899;border-left:1px solid #ACA899;border-right:1px solid #E6E3D6;border-bottom:1px solid #E6E3D6;box-sizing:border-box;"></div>
<svg style="position:absolute;left:25px;top:229px" width="7" height="7" shape-rendering="crispEdges" fill="#000"><rect x="6" y="0" width="1" height="1"/><rect x="5" y="1" width="2" height="1"/><rect x="0" y="2" width="1" height="1"/><rect x="4" y="2" width="3" height="1"/><rect x="0" y="3" width="2" height="1"/><rect x="3" y="3" width="3" height="1"/><rect x="0" y="4" width="5" height="1"/><rect x="1" y="5" width="3" height="1"/><rect x="2" y="6" width="1" height="1"/></svg>
<div style="left:44px;top:225px;width:14px;height:15px;background:#00CC00;"></div>
<div style="left:44px;top:240px;width:14px;height:1px;background:#000;"></div>
<div style="left:44px;top:225px;width:14px;height:15px;background:#00EA10;"></div>
<svg style="position:absolute;left:49px;top:226px" width="5" height="12" shape-rendering="crispEdges" fill="#B00010"><rect x="2" y="0" width="1" height="1"/><rect x="1" y="1" width="3" height="1"/><rect x="0" y="2" width="1" height="1"/><rect x="2" y="2" width="1" height="1"/><rect x="4" y="2" width="1" height="1"/><rect x="0" y="3" width="1" height="1"/><rect x="2" y="3" width="1" height="1"/><rect x="0" y="4" width="3" height="1"/><rect x="0" y="5" width="4" height="1"/><rect x="1" y="6" width="4" height="1"/><rect x="2" y="7" width="3" height="1"/><rect x="2" y="8" width="1" height="1"/><rect x="4" y="8" width="1" height="1"/><rect x="0" y="9" width="1" height="1"/><rect x="2" y="9" width="1" height="1"/><rect x="4" y="9" width="1" height="1"/><rect x="1" y="10" width="3" height="1"/><rect x="2" y="11" width="1" height="1"/></svg>
<div class="t" style="left:62px;top:226.36px;font-size:11px;line-height:14px;color:#000;width:25px;text-align:center;">A</div>
<div class="t" style="left:90px;top:226.36px;font-size:11px;line-height:14px;color:#000;letter-spacing:0.25px;">22/06/2013</div>
<div class="t" style="left:168px;top:226.36px;font-size:11px;line-height:14px;color:#000;width:23px;text-align:right;">5</div>
<div class="t" style="left:193px;top:226.36px;font-size:11px;line-height:14px;color:#000;width:22px;text-align:right;">10</div>
<div class="t" style="left:220px;top:226.36px;font-size:11px;line-height:14px;color:#000;">TN</div>
<div class="t" style="left:264px;top:226.36px;font-size:11px;line-height:14px;color:#000;letter-spacing:-0.3px;">101</div>
<div class="t" style="left:318px;top:226.36px;font-size:11px;line-height:14px;color:#000;letter-spacing:-0.3px;">LAX</div>
<div class="t" style="left:353px;top:226.36px;font-size:11px;line-height:14px;color:#000;letter-spacing:-0.3px;">LOS ANGELES</div>
<div class="t" style="left:537px;top:226.36px;font-size:11px;line-height:14px;color:#000;">T1</div>
<div class="t" style="left:588px;top:226.36px;font-size:11px;line-height:14px;color:#000;letter-spacing:-0.55px;">FOSEA</div>
<div class="t" style="left:651px;top:226.36px;font-size:11px;line-height:14px;color:#000;letter-spacing:-0.2px;">A340</div>
<div class="t" style="left:691px;top:226.36px;font-size:11px;line-height:14px;color:#000;width:49px;text-align:center;">04:47</div>
<div class="t" style="left:741px;top:226.36px;font-size:11px;line-height:14px;color:#000;width:34px;text-align:right;">0</div>
<div class="t" style="left:778px;top:226.36px;font-size:11px;line-height:14px;color:#000;width:42px;text-align:center;">264</div>
<div class="t" style="left:821px;top:226.36px;font-size:11px;line-height:14px;color:#000;width:44px;text-align:center;"></div>
<div class="t" style="left:863px;top:226.36px;font-size:11px;line-height:14px;color:#000;width:46px;text-align:right;letter-spacing:-0.1px;">75</div>
<div style="left:22px;top:245px;width:12px;height:12px;background:#F8F7F0;border-top:1px solid #ACA899;border-left:1px solid #ACA899;border-right:1px solid #E6E3D6;border-bottom:1px solid #E6E3D6;box-sizing:border-box;"></div>
<svg style="position:absolute;left:25px;top:248px" width="7" height="7" shape-rendering="crispEdges" fill="#000"><rect x="6" y="0" width="1" height="1"/><rect x="5" y="1" width="2" height="1"/><rect x="0" y="2" width="1" height="1"/><rect x="4" y="2" width="3" height="1"/><rect x="0" y="3" width="2" height="1"/><rect x="3" y="3" width="3" height="1"/><rect x="0" y="4" width="5" height="1"/><rect x="1" y="5" width="3" height="1"/><rect x="2" y="6" width="1" height="1"/></svg>
<div style="left:44px;top:244px;width:14px;height:15px;background:#00CC00;"></div>
<div style="left:44px;top:259px;width:14px;height:1px;background:#000;"></div>
<svg style="position:absolute;left:44px;top:244px" width="14" height="15" viewBox="0 0 14 15"><polygon points="1.3,8.9 3.5,7.2 5.3,9.7 10.6,0 12,0 12,5.9 6,13.9 5,13.9" fill="#fff"/></svg>
<div class="t" style="left:62px;top:245.36px;font-size:11px;line-height:14px;color:#000;width:25px;text-align:center;">D</div>
<div class="t" style="left:90px;top:245.36px;font-size:11px;line-height:14px;color:#000;letter-spacing:0.25px;">22/06/2013</div>
<div class="t" style="left:168px;top:245.36px;font-size:11px;line-height:14px;color:#000;width:23px;text-align:right;">6</div>
<div class="t" style="left:193px;top:245.36px;font-size:11px;line-height:14px;color:#000;width:22px;text-align:right;">15</div>
<div class="t" style="left:220px;top:245.36px;font-size:11px;line-height:14px;color:#000;">VT</div>
<div class="t" style="left:264px;top:245.36px;font-size:11px;line-height:14px;color:#000;letter-spacing:-0.3px;">126</div>
<div class="t" style="left:318px;top:245.36px;font-size:11px;line-height:14px;color:#000;letter-spacing:-0.3px;">RUR</div>
<div class="t" style="left:353px;top:245.36px;font-size:11px;line-height:14px;color:#000;letter-spacing:-0.3px;">RURUTU</div>
<div class="t" style="left:537px;top:245.36px;font-size:11px;line-height:14px;color:#000;">TD</div>
<div class="t" style="left:588px;top:245.36px;font-size:11px;line-height:14px;color:#000;letter-spacing:-0.55px;">FOIQR</div>
<div class="t" style="left:651px;top:245.36px;font-size:11px;line-height:14px;color:#000;letter-spacing:-0.2px;">AT72</div>
<div class="t" style="left:691px;top:245.36px;font-size:11px;line-height:14px;color:#000;width:49px;text-align:center;">06:25</div>
<div class="t" style="left:741px;top:245.36px;font-size:11px;line-height:14px;color:#000;width:34px;text-align:right;">0</div>
<div class="t" style="left:778px;top:245.36px;font-size:11px;line-height:14px;color:#000;width:42px;text-align:center;">58</div>
<div class="t" style="left:821px;top:245.36px;font-size:11px;line-height:14px;color:#000;width:44px;text-align:center;"></div>
<div class="t" style="left:863px;top:245.36px;font-size:11px;line-height:14px;color:#000;width:46px;text-align:right;letter-spacing:-0.1px;"></div>
<div style="left:22px;top:264px;width:12px;height:12px;background:#F8F7F0;border-top:1px solid #ACA899;border-left:1px solid #ACA899;border-right:1px solid #E6E3D6;border-bottom:1px solid #E6E3D6;box-sizing:border-box;"></div>
<svg style="position:absolute;left:25px;top:267px" width="7" height="7" shape-rendering="crispEdges" fill="#000"><rect x="6" y="0" width="1" height="1"/><rect x="5" y="1" width="2" height="1"/><rect x="0" y="2" width="1" height="1"/><rect x="4" y="2" width="3" height="1"/><rect x="0" y="3" width="2" height="1"/><rect x="3" y="3" width="3" height="1"/><rect x="0" y="4" width="5" height="1"/><rect x="1" y="5" width="3" height="1"/><rect x="2" y="6" width="1" height="1"/></svg>
<div style="left:44px;top:263px;width:14px;height:15px;background:#00CC00;"></div>
<div style="left:44px;top:278px;width:14px;height:1px;background:#000;"></div>
<svg style="position:absolute;left:44px;top:263px" width="14" height="15" viewBox="0 0 14 15"><polygon points="1.3,8.9 3.5,7.2 5.3,9.7 10.6,0 12,0 12,5.9 6,13.9 5,13.9" fill="#fff"/></svg>
<div class="t" style="left:62px;top:264.36px;font-size:11px;line-height:14px;color:#000;width:25px;text-align:center;">D</div>
<div class="t" style="left:90px;top:264.36px;font-size:11px;line-height:14px;color:#000;letter-spacing:0.25px;">22/06/2013</div>
<div class="t" style="left:168px;top:264.36px;font-size:11px;line-height:14px;color:#000;width:23px;text-align:right;">6</div>
<div class="t" style="left:193px;top:264.36px;font-size:11px;line-height:14px;color:#000;width:22px;text-align:right;">45</div>
<div class="t" style="left:220px;top:264.36px;font-size:11px;line-height:14px;color:#000;">VT</div>
<div class="t" style="left:264px;top:264.36px;font-size:11px;line-height:14px;color:#000;letter-spacing:-0.3px;">206</div>
<div class="t" style="left:318px;top:264.36px;font-size:11px;line-height:14px;color:#000;letter-spacing:-0.3px;">MOZ</div>
<div class="t" style="left:353px;top:264.36px;font-size:11px;line-height:14px;color:#000;letter-spacing:-0.3px;">MOOREA</div>
<div class="t" style="left:537px;top:264.36px;font-size:11px;line-height:14px;color:#000;">TD</div>
<div class="t" style="left:588px;top:264.36px;font-size:11px;line-height:14px;color:#000;letter-spacing:-0.55px;">FOIQC</div>
<div class="t" style="left:651px;top:264.36px;font-size:11px;line-height:14px;color:#000;letter-spacing:-0.2px;">AT45</div>
<div class="t" style="left:691px;top:264.36px;font-size:11px;line-height:14px;color:#000;width:49px;text-align:center;">06:54</div>
<div class="t" style="left:741px;top:264.36px;font-size:11px;line-height:14px;color:#000;width:34px;text-align:right;">0</div>
<div class="t" style="left:778px;top:264.36px;font-size:11px;line-height:14px;color:#000;width:42px;text-align:center;">31</div>
<div class="t" style="left:821px;top:264.36px;font-size:11px;line-height:14px;color:#000;width:44px;text-align:center;"></div>
<div class="t" style="left:863px;top:264.36px;font-size:11px;line-height:14px;color:#000;width:46px;text-align:right;letter-spacing:-0.1px;">11</div>
<div style="left:22px;top:283px;width:12px;height:12px;background:#F8F7F0;border-top:1px solid #ACA899;border-left:1px solid #ACA899;border-right:1px solid #E6E3D6;border-bottom:1px solid #E6E3D6;box-sizing:border-box;"></div>
<svg style="position:absolute;left:25px;top:286px" width="7" height="7" shape-rendering="crispEdges" fill="#000"><rect x="6" y="0" width="1" height="1"/><rect x="5" y="1" width="2" height="1"/><rect x="0" y="2" width="1" height="1"/><rect x="4" y="2" width="3" height="1"/><rect x="0" y="3" width="2" height="1"/><rect x="3" y="3" width="3" height="1"/><rect x="0" y="4" width="5" height="1"/><rect x="1" y="5" width="3" height="1"/><rect x="2" y="6" width="1" height="1"/></svg>
<div style="left:44px;top:282px;width:14px;height:15px;background:#00CC00;"></div>
<div style="left:44px;top:297px;width:14px;height:1px;background:#000;"></div>
<svg style="position:absolute;left:44px;top:282px" width="14" height="15" viewBox="0 0 14 15"><polygon points="1.3,8.9 3.5,7.2 5.3,9.7 10.6,0 12,0 12,5.9 6,13.9 5,13.9" fill="#fff"/></svg>
<div class="t" style="left:62px;top:283.36px;font-size:11px;line-height:14px;color:#000;width:25px;text-align:center;">D</div>
<div class="t" style="left:90px;top:283.36px;font-size:11px;line-height:14px;color:#000;letter-spacing:0.25px;">22/06/2013</div>
<div class="t" style="left:168px;top:283.36px;font-size:11px;line-height:14px;color:#000;width:23px;text-align:right;">7</div>
<div class="t" style="left:193px;top:283.36px;font-size:11px;line-height:14px;color:#000;width:22px;text-align:right;">00</div>
<div class="t" style="left:220px;top:283.36px;font-size:11px;line-height:14px;color:#000;">VT</div>
<div class="t" style="left:264px;top:283.36px;font-size:11px;line-height:14px;color:#000;letter-spacing:-0.3px;">311</div>
<div class="t" style="left:318px;top:283.36px;font-size:11px;line-height:14px;color:#000;letter-spacing:-0.3px;">RFP</div>
<div class="t" style="left:353px;top:283.36px;font-size:11px;line-height:14px;color:#000;letter-spacing:-0.3px;">RAIATEA</div>
<div class="t" style="left:537px;top:283.36px;font-size:11px;line-height:14px;color:#000;">TD</div>
<div class="t" style="left:588px;top:283.36px;font-size:11px;line-height:14px;color:#000;letter-spacing:-0.55px;">FOIQV</div>
<div class="t" style="left:651px;top:283.36px;font-size:11px;line-height:14px;color:#000;letter-spacing:-0.2px;">AT72</div>
<div class="t" style="left:691px;top:283.36px;font-size:11px;line-height:14px;color:#000;width:49px;text-align:center;">07:12</div>
<div class="t" style="left:741px;top:283.36px;font-size:11px;line-height:14px;color:#000;width:34px;text-align:right;">0</div>
<div class="t" style="left:778px;top:283.36px;font-size:11px;line-height:14px;color:#000;width:42px;text-align:center;">57</div>
<div class="t" style="left:821px;top:283.36px;font-size:11px;line-height:14px;color:#000;width:44px;text-align:center;"></div>
<div class="t" style="left:863px;top:283.36px;font-size:11px;line-height:14px;color:#000;width:46px;text-align:right;letter-spacing:-0.1px;">366</div>
<div style="left:22px;top:302px;width:12px;height:12px;background:#F8F7F0;border-top:1px solid #ACA899;border-left:1px solid #ACA899;border-right:1px solid #E6E3D6;border-bottom:1px solid #E6E3D6;box-sizing:border-box;"></div>
<svg style="position:absolute;left:25px;top:305px" width="7" height="7" shape-rendering="crispEdges" fill="#000"><rect x="6" y="0" width="1" height="1"/><rect x="5" y="1" width="2" height="1"/><rect x="0" y="2" width="1" height="1"/><rect x="4" y="2" width="3" height="1"/><rect x="0" y="3" width="2" height="1"/><rect x="3" y="3" width="3" height="1"/><rect x="0" y="4" width="5" height="1"/><rect x="1" y="5" width="3" height="1"/><rect x="2" y="6" width="1" height="1"/></svg>
<div style="left:44px;top:301px;width:14px;height:15px;background:#00CC00;"></div>
<div style="left:44px;top:316px;width:14px;height:1px;background:#000;"></div>
<svg style="position:absolute;left:44px;top:301px" width="14" height="15" viewBox="0 0 14 15"><polygon points="1.3,8.9 3.5,7.2 5.3,9.7 10.6,0 12,0 12,5.9 6,13.9 5,13.9" fill="#fff"/></svg>
<div class="t" style="left:62px;top:302.36px;font-size:11px;line-height:14px;color:#000;width:25px;text-align:center;">D</div>
<div class="t" style="left:90px;top:302.36px;font-size:11px;line-height:14px;color:#000;letter-spacing:0.25px;">22/06/2013</div>
<div class="t" style="left:168px;top:302.36px;font-size:11px;line-height:14px;color:#000;width:23px;text-align:right;">7</div>
<div class="t" style="left:193px;top:302.36px;font-size:11px;line-height:14px;color:#000;width:22px;text-align:right;">15</div>
<div class="t" style="left:220px;top:302.36px;font-size:11px;line-height:14px;color:#000;">VT</div>
<div class="t" style="left:264px;top:302.36px;font-size:11px;line-height:14px;color:#000;letter-spacing:-0.3px;">556</div>
<div class="t" style="left:318px;top:302.36px;font-size:11px;line-height:14px;color:#000;letter-spacing:-0.3px;">RGI</div>
<div class="t" style="left:353px;top:302.36px;font-size:11px;line-height:14px;color:#000;letter-spacing:-0.3px;">RANGIROA</div>
<div class="t" style="left:537px;top:302.36px;font-size:11px;line-height:14px;color:#000;">TD</div>
<div class="t" style="left:588px;top:302.36px;font-size:11px;line-height:14px;color:#000;letter-spacing:-0.55px;">FOIQD</div>
<div class="t" style="left:651px;top:302.36px;font-size:11px;line-height:14px;color:#000;letter-spacing:-0.2px;">AT45</div>
<div class="t" style="left:691px;top:302.36px;font-size:11px;line-height:14px;color:#000;width:49px;text-align:center;">07:22</div>
<div class="t" style="left:741px;top:302.36px;font-size:11px;line-height:14px;color:#000;width:34px;text-align:right;">0</div>
<div class="t" style="left:778px;top:302.36px;font-size:11px;line-height:14px;color:#000;width:42px;text-align:center;">39</div>
<div class="t" style="left:821px;top:302.36px;font-size:11px;line-height:14px;color:#000;width:44px;text-align:center;"></div>
<div class="t" style="left:863px;top:302.36px;font-size:11px;line-height:14px;color:#000;width:46px;text-align:right;letter-spacing:-0.1px;">392</div>
<div style="left:22px;top:321px;width:12px;height:12px;background:#F8F7F0;border-top:1px solid #ACA899;border-left:1px solid #ACA899;border-right:1px solid #E6E3D6;border-bottom:1px solid #E6E3D6;box-sizing:border-box;"></div>
<svg style="position:absolute;left:25px;top:324px" width="7" height="7" shape-rendering="crispEdges" fill="#000"><rect x="6" y="0" width="1" height="1"/><rect x="5" y="1" width="2" height="1"/><rect x="0" y="2" width="1" height="1"/><rect x="4" y="2" width="3" height="1"/><rect x="0" y="3" width="2" height="1"/><rect x="3" y="3" width="3" height="1"/><rect x="0" y="4" width="5" height="1"/><rect x="1" y="5" width="3" height="1"/><rect x="2" y="6" width="1" height="1"/></svg>
<div style="left:44px;top:320px;width:14px;height:15px;background:#00CC00;"></div>
<div style="left:44px;top:335px;width:14px;height:1px;background:#000;"></div>
<div style="left:44px;top:320px;width:14px;height:15px;background:#00EA10;"></div>
<svg style="position:absolute;left:49px;top:321px" width="5" height="12" shape-rendering="crispEdges" fill="#B00010"><rect x="2" y="0" width="1" height="1"/><rect x="1" y="1" width="3" height="1"/><rect x="0" y="2" width="1" height="1"/><rect x="2" y="2" width="1" height="1"/><rect x="4" y="2" width="1" height="1"/><rect x="0" y="3" width="1" height="1"/><rect x="2" y="3" width="1" height="1"/><rect x="0" y="4" width="3" height="1"/><rect x="0" y="5" width="4" height="1"/><rect x="1" y="6" width="4" height="1"/><rect x="2" y="7" width="3" height="1"/><rect x="2" y="8" width="1" height="1"/><rect x="4" y="8" width="1" height="1"/><rect x="0" y="9" width="1" height="1"/><rect x="2" y="9" width="1" height="1"/><rect x="4" y="9" width="1" height="1"/><rect x="1" y="10" width="3" height="1"/><rect x="2" y="11" width="1" height="1"/></svg>
<div class="t" style="left:62px;top:321.36px;font-size:11px;line-height:14px;color:#000;width:25px;text-align:center;">D</div>
<div class="t" style="left:90px;top:321.36px;font-size:11px;line-height:14px;color:#000;letter-spacing:0.25px;">22/06/2013</div>
<div class="t" style="left:168px;top:321.36px;font-size:11px;line-height:14px;color:#000;width:23px;text-align:right;">7</div>
<div class="t" style="left:193px;top:321.36px;font-size:11px;line-height:14px;color:#000;width:22px;text-align:right;">30</div>
<div class="t" style="left:220px;top:321.36px;font-size:11px;line-height:14px;color:#000;">TN</div>
<div class="t" style="left:264px;top:321.36px;font-size:11px;line-height:14px;color:#000;letter-spacing:-0.3px;">101</div>
<div class="t" style="left:318px;top:321.36px;font-size:11px;line-height:14px;color:#000;letter-spacing:-0.3px;">AKL</div>
<div class="t" style="left:353px;top:321.36px;font-size:11px;line-height:14px;color:#000;letter-spacing:-0.3px;">AUCKLAND</div>
<div class="t" style="left:537px;top:321.36px;font-size:11px;line-height:14px;color:#000;">T1</div>
<div class="t" style="left:588px;top:321.36px;font-size:11px;line-height:14px;color:#000;letter-spacing:-0.55px;">FOSEA</div>
<div class="t" style="left:651px;top:321.36px;font-size:11px;line-height:14px;color:#000;letter-spacing:-0.2px;">A340</div>
<div class="t" style="left:691px;top:321.36px;font-size:11px;line-height:14px;color:#000;width:49px;text-align:center;">07:20</div>
<div class="t" style="left:741px;top:321.36px;font-size:11px;line-height:14px;color:#000;width:34px;text-align:right;">0</div>
<div class="t" style="left:778px;top:321.36px;font-size:11px;line-height:14px;color:#000;width:42px;text-align:center;">236</div>
<div class="t" style="left:821px;top:321.36px;font-size:11px;line-height:14px;color:#000;width:44px;text-align:center;">6</div>
<div class="t" style="left:863px;top:321.36px;font-size:11px;line-height:14px;color:#000;width:46px;text-align:right;letter-spacing:-0.1px;">8 457</div>
<div style="left:22px;top:340px;width:12px;height:12px;background:#F8F7F0;border-top:1px solid #ACA899;border-left:1px solid #ACA899;border-right:1px solid #E6E3D6;border-bottom:1px solid #E6E3D6;box-sizing:border-box;"></div>
<svg style="position:absolute;left:25px;top:343px" width="7" height="7" shape-rendering="crispEdges" fill="#000"><rect x="6" y="0" width="1" height="1"/><rect x="5" y="1" width="2" height="1"/><rect x="0" y="2" width="1" height="1"/><rect x="4" y="2" width="3" height="1"/><rect x="0" y="3" width="2" height="1"/><rect x="3" y="3" width="3" height="1"/><rect x="0" y="4" width="5" height="1"/><rect x="1" y="5" width="3" height="1"/><rect x="2" y="6" width="1" height="1"/></svg>
<div style="left:44px;top:339px;width:14px;height:15px;background:#00CC00;"></div>
<div style="left:44px;top:354px;width:14px;height:1px;background:#000;"></div>
<svg style="position:absolute;left:44px;top:339px" width="14" height="15" viewBox="0 0 14 15"><polygon points="1.3,8.9 3.5,7.2 5.3,9.7 10.6,0 12,0 12,5.9 6,13.9 5,13.9" fill="#fff"/></svg>
<div class="t" style="left:62px;top:340.36px;font-size:11px;line-height:14px;color:#000;width:25px;text-align:center;">A</div>
<div class="t" style="left:90px;top:340.36px;font-size:11px;line-height:14px;color:#000;letter-spacing:0.25px;">22/06/2013</div>
<div class="t" style="left:168px;top:340.36px;font-size:11px;line-height:14px;color:#000;width:23px;text-align:right;">7</div>
<div class="t" style="left:193px;top:340.36px;font-size:11px;line-height:14px;color:#000;width:22px;text-align:right;">30</div>
<div class="t" style="left:220px;top:340.36px;font-size:11px;line-height:14px;color:#000;">VT</div>
<div class="t" style="left:264px;top:340.36px;font-size:11px;line-height:14px;color:#000;letter-spacing:-0.3px;">206</div>
<div class="t" style="left:318px;top:340.36px;font-size:11px;line-height:14px;color:#000;letter-spacing:-0.3px;">MOZ</div>
<div class="t" style="left:353px;top:340.36px;font-size:11px;line-height:14px;color:#000;letter-spacing:-0.3px;">MOOREA</div>
<div class="t" style="left:537px;top:340.36px;font-size:11px;line-height:14px;color:#000;">TD</div>
<div class="t" style="left:588px;top:340.36px;font-size:11px;line-height:14px;color:#000;letter-spacing:-0.55px;">FOIQC</div>
<div class="t" style="left:651px;top:340.36px;font-size:11px;line-height:14px;color:#000;letter-spacing:-0.2px;">AT45</div>
<div class="t" style="left:691px;top:340.36px;font-size:11px;line-height:14px;color:#000;width:49px;text-align:center;">07:34</div>
<div class="t" style="left:741px;top:340.36px;font-size:11px;line-height:14px;color:#000;width:34px;text-align:right;">0</div>
<div class="t" style="left:778px;top:340.36px;font-size:11px;line-height:14px;color:#000;width:42px;text-align:center;">6</div>
<div class="t" style="left:821px;top:340.36px;font-size:11px;line-height:14px;color:#000;width:44px;text-align:center;"></div>
<div class="t" style="left:863px;top:340.36px;font-size:11px;line-height:14px;color:#000;width:46px;text-align:right;letter-spacing:-0.1px;"></div>
<div style="left:22px;top:358px;width:13px;height:14px;background:#FFFFFF;border:1px solid #E6E3D6;box-sizing:border-box;"></div>
<svg style="position:absolute;left:25px;top:362px" width="7" height="7" shape-rendering="crispEdges" fill="#000"><rect x="6" y="0" width="1" height="1"/><rect x="5" y="1" width="2" height="1"/><rect x="0" y="2" width="1" height="1"/><rect x="4" y="2" width="3" height="1"/><rect x="0" y="3" width="2" height="1"/><rect x="3" y="3" width="3" height="1"/><rect x="0" y="4" width="5" height="1"/><rect x="1" y="5" width="3" height="1"/><rect x="2" y="6" width="1" height="1"/></svg>
<div style="left:44px;top:358px;width:14px;height:15px;background:#00CC00;"></div>
<div style="left:44px;top:373px;width:14px;height:1px;background:#000;"></div>
<svg style="position:absolute;left:44px;top:358px" width="14" height="15" viewBox="0 0 14 15"><polygon points="1.3,8.9 3.5,7.2 5.3,9.7 10.6,0 12,0 12,5.9 6,13.9 5,13.9" fill="#316AC5" stroke="#fff" stroke-width="0.8"/></svg>
<div class="t" style="left:62px;top:359.36px;font-size:11px;line-height:14px;color:#fff;width:25px;text-align:center;">D</div>
<div class="t" style="left:90px;top:359.36px;font-size:11px;line-height:14px;color:#fff;letter-spacing:0.25px;">22/06/2013</div>
<div class="t" style="left:168px;top:359.36px;font-size:11px;line-height:14px;color:#fff;width:23px;text-align:right;">7</div>
<div class="t" style="left:193px;top:359.36px;font-size:11px;line-height:14px;color:#fff;width:22px;text-align:right;">30</div>
<div class="t" style="left:220px;top:359.36px;font-size:11px;line-height:14px;color:#000;">VT</div>
<div class="t" style="left:264px;top:359.36px;font-size:11px;line-height:14px;color:#fff;letter-spacing:-0.3px;">416</div>
<div class="t" style="left:318px;top:359.36px;font-size:11px;line-height:14px;color:#fff;letter-spacing:-0.3px;">BOB</div>
<div class="t" style="left:353px;top:359.36px;font-size:11px;line-height:14px;color:#fff;letter-spacing:-0.3px;">BORA BORA</div>
<div class="t" style="left:537px;top:359.36px;font-size:11px;line-height:14px;color:#fff;">TD</div>
<div class="t" style="left:588px;top:359.36px;font-size:11px;line-height:14px;color:#fff;letter-spacing:-0.55px;">FOHJS</div>
<div class="t" style="left:651px;top:359.36px;font-size:11px;line-height:14px;color:#fff;letter-spacing:-0.2px;">AT72</div>
<div class="t" style="left:691px;top:359.36px;font-size:11px;line-height:14px;color:#fff;width:49px;text-align:center;">07:41</div>
<div class="t" style="left:741px;top:359.36px;font-size:11px;line-height:14px;color:#fff;width:34px;text-align:right;">0</div>
<div class="t" style="left:778px;top:359.36px;font-size:11px;line-height:14px;color:#fff;width:42px;text-align:center;">66</div>
<div class="t" style="left:821px;top:359.36px;font-size:11px;line-height:14px;color:#fff;width:44px;text-align:center;"></div>
<div class="t" style="left:863px;top:359.36px;font-size:11px;line-height:14px;color:#fff;width:46px;text-align:right;letter-spacing:-0.1px;">110</div>
<div style="left:22px;top:378px;width:12px;height:12px;background:#F8F7F0;border-top:1px solid #ACA899;border-left:1px solid #ACA899;border-right:1px solid #E6E3D6;border-bottom:1px solid #E6E3D6;box-sizing:border-box;"></div>
<svg style="position:absolute;left:25px;top:381px" width="7" height="7" shape-rendering="crispEdges" fill="#000"><rect x="6" y="0" width="1" height="1"/><rect x="5" y="1" width="2" height="1"/><rect x="0" y="2" width="1" height="1"/><rect x="4" y="2" width="3" height="1"/><rect x="0" y="3" width="2" height="1"/><rect x="3" y="3" width="3" height="1"/><rect x="0" y="4" width="5" height="1"/><rect x="1" y="5" width="3" height="1"/><rect x="2" y="6" width="1" height="1"/></svg>
<div style="left:44px;top:377px;width:14px;height:15px;background:#00CC00;"></div>
<div style="left:44px;top:392px;width:14px;height:1px;background:#000;"></div>
<svg style="position:absolute;left:44px;top:377px" width="14" height="15" viewBox="0 0 14 15"><polygon points="1.3,8.9 3.5,7.2 5.3,9.7 10.6,0 12,0 12,5.9 6,13.9 5,13.9" fill="#fff"/></svg>
<div class="t" style="left:62px;top:378.36px;font-size:11px;line-height:14px;color:#000;width:25px;text-align:center;">D</div>
<div class="t" style="left:90px;top:378.36px;font-size:11px;line-height:14px;color:#000;letter-spacing:0.25px;">22/06/2013</div>
<div class="t" style="left:168px;top:378.36px;font-size:11px;line-height:14px;color:#000;width:23px;text-align:right;">7</div>
<div class="t" style="left:193px;top:378.36px;font-size:11px;line-height:14px;color:#000;width:22px;text-align:right;">45</div>
<div class="t" style="left:220px;top:378.36px;font-size:11px;line-height:14px;color:#000;">VT</div>
<div class="t" style="left:264px;top:378.36px;font-size:11px;line-height:14px;color:#000;letter-spacing:-0.3px;"></div>
<div class="t" style="left:318px;top:378.36px;font-size:11px;line-height:14px;color:#000;letter-spacing:-0.3px;"></div>
<div class="t" style="left:353px;top:378.36px;font-size:11px;line-height:14px;color:#000;letter-spacing:-0.3px;"></div>
<div class="t" style="left:537px;top:378.36px;font-size:11px;line-height:14px;color:#000;">TD</div>
<div class="t" style="left:588px;top:378.36px;font-size:11px;line-height:14px;color:#000;letter-spacing:-0.55px;">FOIQT</div>
<div class="t" style="left:651px;top:378.36px;font-size:11px;line-height:14px;color:#000;letter-spacing:-0.2px;">AT72</div>
<div class="t" style="left:691px;top:378.36px;font-size:11px;line-height:14px;color:#000;width:49px;text-align:center;">07:53</div>
<div class="t" style="left:741px;top:378.36px;font-size:11px;line-height:14px;color:#000;width:34px;text-align:right;">0</div>
<div class="t" style="left:778px;top:378.36px;font-size:11px;line-height:14px;color:#000;width:42px;text-align:center;">54</div>
<div class="t" style="left:821px;top:378.36px;font-size:11px;line-height:14px;color:#000;width:44px;text-align:center;"></div>
<div class="t" style="left:863px;top:378.36px;font-size:11px;line-height:14px;color:#000;width:46px;text-align:right;letter-spacing:-0.1px;"></div>
<div style="left:22px;top:397px;width:12px;height:12px;background:#F8F7F0;border-top:1px solid #ACA899;border-left:1px solid #ACA899;border-right:1px solid #E6E3D6;border-bottom:1px solid #E6E3D6;box-sizing:border-box;"></div>
<svg style="position:absolute;left:25px;top:400px" width="7" height="7" shape-rendering="crispEdges" fill="#000"><rect x="6" y="0" width="1" height="1"/><rect x="5" y="1" width="2" height="1"/><rect x="0" y="2" width="1" height="1"/><rect x="4" y="2" width="3" height="1"/><rect x="0" y="3" width="2" height="1"/><rect x="3" y="3" width="3" height="1"/><rect x="0" y="4" width="5" height="1"/><rect x="1" y="5" width="3" height="1"/><rect x="2" y="6" width="1" height="1"/></svg>
<div style="left:44px;top:396px;width:14px;height:15px;background:#00CC00;"></div>
<div style="left:44px;top:411px;width:14px;height:1px;background:#000;"></div>
<svg style="position:absolute;left:44px;top:396px" width="14" height="15" viewBox="0 0 14 15"><polygon points="1.3,8.9 3.5,7.2 5.3,9.7 10.6,0 12,0 12,5.9 6,13.9 5,13.9" fill="#fff"/></svg>
<div class="t" style="left:62px;top:397.36px;font-size:11px;line-height:14px;color:#000;width:25px;text-align:center;">D</div>
<div class="t" style="left:90px;top:397.36px;font-size:11px;line-height:14px;color:#000;letter-spacing:0.25px;">22/06/2013</div>
<div class="t" style="left:168px;top:397.36px;font-size:11px;line-height:14px;color:#000;width:23px;text-align:right;">7</div>
<div class="t" style="left:193px;top:397.36px;font-size:11px;line-height:14px;color:#000;width:22px;text-align:right;">53</div>
<div class="t" style="left:220px;top:397.36px;font-size:11px;line-height:14px;color:#000;">AA</div>
<div class="t" style="left:264px;top:397.36px;font-size:11px;line-height:14px;color:#000;letter-spacing:-0.3px;"></div>
<div class="t" style="left:318px;top:397.36px;font-size:11px;line-height:14px;color:#000;letter-spacing:-0.3px;"></div>
<div class="t" style="left:353px;top:397.36px;font-size:11px;line-height:14px;color:#000;letter-spacing:-0.3px;"></div>
<div class="t" style="left:537px;top:397.36px;font-size:11px;line-height:14px;color:#000;"></div>
<div class="t" style="left:588px;top:397.36px;font-size:11px;line-height:14px;color:#000;letter-spacing:-0.55px;">FOIQM</div>
<div class="t" style="left:651px;top:397.36px;font-size:11px;line-height:14px;color:#000;letter-spacing:-0.2px;">BE20</div>
<div class="t" style="left:691px;top:397.36px;font-size:11px;line-height:14px;color:#000;width:49px;text-align:center;">07:45</div>
<div class="t" style="left:741px;top:397.36px;font-size:11px;line-height:14px;color:#000;width:34px;text-align:right;">0</div>
<div class="t" style="left:778px;top:397.36px;font-size:11px;line-height:14px;color:#000;width:42px;text-align:center;">7</div>
<div class="t" style="left:821px;top:397.36px;font-size:11px;line-height:14px;color:#000;width:44px;text-align:center;"></div>
<div class="t" style="left:863px;top:397.36px;font-size:11px;line-height:14px;color:#000;width:46px;text-align:right;letter-spacing:-0.1px;"></div>
<div style="left:22px;top:416px;width:12px;height:12px;background:#F8F7F0;border-top:1px solid #ACA899;border-left:1px solid #ACA899;border-right:1px solid #E6E3D6;border-bottom:1px solid #E6E3D6;box-sizing:border-box;"></div>
<svg style="position:absolute;left:25px;top:419px" width="7" height="7" shape-rendering="crispEdges" fill="#000"><rect x="6" y="0" width="1" height="1"/><rect x="5" y="1" width="2" height="1"/><rect x="0" y="2" width="1" height="1"/><rect x="4" y="2" width="3" height="1"/><rect x="0" y="3" width="2" height="1"/><rect x="3" y="3" width="3" height="1"/><rect x="0" y="4" width="5" height="1"/><rect x="1" y="5" width="3" height="1"/><rect x="2" y="6" width="1" height="1"/></svg>
<div style="left:44px;top:415px;width:14px;height:15px;background:#00CC00;"></div>
<div style="left:44px;top:430px;width:14px;height:1px;background:#000;"></div>
<svg style="position:absolute;left:44px;top:415px" width="14" height="15" viewBox="0 0 14 15"><polygon points="1.3,8.9 3.5,7.2 5.3,9.7 10.6,0 12,0 12,5.9 6,13.9 5,13.9" fill="#fff"/></svg>
<div class="t" style="left:62px;top:416.36px;font-size:11px;line-height:14px;color:#000;width:25px;text-align:center;">D</div>
<div class="t" style="left:90px;top:416.36px;font-size:11px;line-height:14px;color:#000;letter-spacing:0.25px;">22/06/2013</div>
<div class="t" style="left:168px;top:416.36px;font-size:11px;line-height:14px;color:#000;width:23px;text-align:right;">8</div>
<div class="t" style="left:193px;top:416.36px;font-size:11px;line-height:14px;color:#000;width:22px;text-align:right;">00</div>
<div class="t" style="left:220px;top:416.36px;font-size:11px;line-height:14px;color:#000;">VT</div>
<div class="t" style="left:264px;top:416.36px;font-size:11px;line-height:14px;color:#000;letter-spacing:-0.3px;"></div>
<div class="t" style="left:318px;top:416.36px;font-size:11px;line-height:14px;color:#000;letter-spacing:-0.3px;"></div>
<div class="t" style="left:353px;top:416.36px;font-size:11px;line-height:14px;color:#000;letter-spacing:-0.3px;"></div>
<div class="t" style="left:537px;top:416.36px;font-size:11px;line-height:14px;color:#000;">TD</div>
<div class="t" style="left:588px;top:416.36px;font-size:11px;line-height:14px;color:#000;letter-spacing:-0.55px;">FOIQC</div>
<div class="t" style="left:651px;top:416.36px;font-size:11px;line-height:14px;color:#000;letter-spacing:-0.2px;">AT45</div>
<div class="t" style="left:691px;top:416.36px;font-size:11px;line-height:14px;color:#000;width:49px;text-align:center;">08:14</div>
<div class="t" style="left:741px;top:416.36px;font-size:11px;line-height:14px;color:#000;width:34px;text-align:right;">0</div>
<div class="t" style="left:778px;top:416.36px;font-size:11px;line-height:14px;color:#000;width:42px;text-align:center;">28</div>
<div class="t" style="left:821px;top:416.36px;font-size:11px;line-height:14px;color:#000;width:44px;text-align:center;"></div>
<div class="t" style="left:863px;top:416.36px;font-size:11px;line-height:14px;color:#000;width:46px;text-align:right;letter-spacing:-0.1px;">275</div>
<div style="left:22px;top:435px;width:12px;height:12px;background:#F8F7F0;border-top:1px solid #ACA899;border-left:1px solid #ACA899;border-right:1px solid #E6E3D6;border-bottom:1px solid #E6E3D6;box-sizing:border-box;"></div>
<svg style="position:absolute;left:25px;top:438px" width="7" height="7" shape-rendering="crispEdges" fill="#000"><rect x="6" y="0" width="1" height="1"/><rect x="5" y="1" width="2" height="1"/><rect x="0" y="2" width="1" height="1"/><rect x="4" y="2" width="3" height="1"/><rect x="0" y="3" width="2" height="1"/><rect x="3" y="3" width="3" height="1"/><rect x="0" y="4" width="5" height="1"/><rect x="1" y="5" width="3" height="1"/><rect x="2" y="6" width="1" height="1"/></svg>
<div style="left:44px;top:434px;width:14px;height:15px;background:#00CC00;"></div>
<div style="left:44px;top:449px;width:14px;height:1px;background:#000;"></div>
<svg style="position:absolute;left:44px;top:434px" width="14" height="15" viewBox="0 0 14 15"><polygon points="1.3,8.9 3.5,7.2 5.3,9.7 10.6,0 12,0 12,5.9 6,13.9 5,13.9" fill="#fff"/></svg>
<div class="t" style="left:62px;top:435.36px;font-size:11px;line-height:14px;color:#000;width:25px;text-align:center;">D</div>
<div class="t" style="left:90px;top:435.36px;font-size:11px;line-height:14px;color:#000;letter-spacing:0.25px;">22/06/2013</div>
<div class="t" style="left:168px;top:435.36px;font-size:11px;line-height:14px;color:#000;width:23px;text-align:right;">8</div>
<div class="t" style="left:193px;top:435.36px;font-size:11px;line-height:14px;color:#000;width:22px;text-align:right;">02</div>
<div class="t" style="left:220px;top:435.36px;font-size:11px;line-height:14px;color:#000;">AA</div>
<div class="t" style="left:264px;top:435.36px;font-size:11px;line-height:14px;color:#000;letter-spacing:-0.3px;"></div>
<div class="t" style="left:318px;top:435.36px;font-size:11px;line-height:14px;color:#000;letter-spacing:-0.3px;"></div>
<div class="t" style="left:353px;top:435.36px;font-size:11px;line-height:14px;color:#000;letter-spacing:-0.3px;"></div>
<div class="t" style="left:537px;top:435.36px;font-size:11px;line-height:14px;color:#000;"></div>
<div class="t" style="left:588px;top:435.36px;font-size:11px;line-height:14px;color:#000;letter-spacing:-0.55px;">FOIQL</div>
<div class="t" style="left:651px;top:435.36px;font-size:11px;line-height:14px;color:#000;letter-spacing:-0.2px;">BE20</div>
<div class="t" style="left:691px;top:435.36px;font-size:11px;line-height:14px;color:#000;width:49px;text-align:center;">07:55</div>
<div class="t" style="left:741px;top:435.36px;font-size:11px;line-height:14px;color:#000;width:34px;text-align:right;">0</div>
<div class="t" style="left:778px;top:435.36px;font-size:11px;line-height:14px;color:#000;width:42px;text-align:center;">7</div>
<div class="t" style="left:821px;top:435.36px;font-size:11px;line-height:14px;color:#000;width:44px;text-align:center;"></div>
<div class="t" style="left:863px;top:435.36px;font-size:11px;line-height:14px;color:#000;width:46px;text-align:right;letter-spacing:-0.1px;"></div>
<div style="left:22px;top:454px;width:12px;height:12px;background:#F8F7F0;border-top:1px solid #ACA899;border-left:1px solid #ACA899;border-right:1px solid #E6E3D6;border-bottom:1px solid #E6E3D6;box-sizing:border-box;"></div>
<svg style="position:absolute;left:25px;top:457px" width="7" height="7" shape-rendering="crispEdges" fill="#000"><rect x="6" y="0" width="1" height="1"/><rect x="5" y="1" width="2" height="1"/><rect x="0" y="2" width="1" height="1"/><rect x="4" y="2" width="3" height="1"/><rect x="0" y="3" width="2" height="1"/><rect x="3" y="3" width="3" height="1"/><rect x="0" y="4" width="5" height="1"/><rect x="1" y="5" width="3" height="1"/><rect x="2" y="6" width="1" height="1"/></svg>
<div style="left:44px;top:453px;width:14px;height:15px;background:#00CC00;"></div>
<div style="left:44px;top:468px;width:14px;height:1px;background:#000;"></div>
<svg style="position:absolute;left:44px;top:453px" width="14" height="15" viewBox="0 0 14 15"><polygon points="1.3,8.9 3.5,7.2 5.3,9.7 10.6,0 12,0 12,5.9 6,13.9 5,13.9" fill="#fff"/></svg>
<div class="t" style="left:62px;top:454.36px;font-size:11px;line-height:14px;color:#000;width:25px;text-align:center;">D</div>
<div class="t" style="left:90px;top:454.36px;font-size:11px;line-height:14px;color:#000;letter-spacing:0.25px;">22/06/2013</div>
<div class="t" style="left:168px;top:454.36px;font-size:11px;line-height:14px;color:#000;width:23px;text-align:right;">8</div>
<div class="t" style="left:193px;top:454.36px;font-size:11px;line-height:14px;color:#000;width:22px;text-align:right;">15</div>
<div class="t" style="left:220px;top:454.36px;font-size:11px;line-height:14px;color:#000;">VT</div>
<div class="t" style="left:264px;top:454.36px;font-size:11px;line-height:14px;color:#000;letter-spacing:-0.3px;"></div>
<div class="t" style="left:318px;top:454.36px;font-size:11px;line-height:14px;color:#000;letter-spacing:-0.3px;"></div>
<div class="t" style="left:353px;top:454.36px;font-size:11px;line-height:14px;color:#000;letter-spacing:-0.3px;"></div>
<div class="t" style="left:537px;top:454.36px;font-size:11px;line-height:14px;color:#000;">TD</div>
<div class="t" style="left:588px;top:454.36px;font-size:11px;line-height:14px;color:#000;letter-spacing:-0.55px;">FOIQN</div>
<div class="t" style="left:651px;top:454.36px;font-size:11px;line-height:14px;color:#000;letter-spacing:-0.2px;">AT72</div>
<div class="t" style="left:691px;top:454.36px;font-size:11px;line-height:14px;color:#000;width:49px;text-align:center;">08:32</div>
<div class="t" style="left:741px;top:454.36px;font-size:11px;line-height:14px;color:#000;width:34px;text-align:right;">0</div>
<div class="t" style="left:778px;top:454.36px;font-size:11px;line-height:14px;color:#000;width:42px;text-align:center;">50</div>
<div class="t" style="left:821px;top:454.36px;font-size:11px;line-height:14px;color:#000;width:44px;text-align:center;"></div>
<div class="t" style="left:863px;top:454.36px;font-size:11px;line-height:14px;color:#000;width:46px;text-align:right;letter-spacing:-0.1px;">466</div>
<div style="left:22px;top:473px;width:12px;height:12px;background:#F8F7F0;border-top:1px solid #ACA899;border-left:1px solid #ACA899;border-right:1px solid #E6E3D6;border-bottom:1px solid #E6E3D6;box-sizing:border-box;"></div>
<svg style="position:absolute;left:25px;top:476px" width="7" height="7" shape-rendering="crispEdges" fill="#000"><rect x="6" y="0" width="1" height="1"/><rect x="5" y="1" width="2" height="1"/><rect x="0" y="2" width="1" height="1"/><rect x="4" y="2" width="3" height="1"/><rect x="0" y="3" width="2" height="1"/><rect x="3" y="3" width="3" height="1"/><rect x="0" y="4" width="5" height="1"/><rect x="1" y="5" width="3" height="1"/><rect x="2" y="6" width="1" height="1"/></svg>
<div style="left:44px;top:472px;width:14px;height:15px;background:#00CC00;"></div>
<div style="left:44px;top:487px;width:14px;height:1px;background:#000;"></div>
<svg style="position:absolute;left:44px;top:472px" width="14" height="15" viewBox="0 0 14 15"><polygon points="1.3,8.9 3.5,7.2 5.3,9.7 10.6,0 12,0 12,5.9 6,13.9 5,13.9" fill="#fff"/></svg>
<div class="t" style="left:62px;top:473.36px;font-size:11px;line-height:14px;color:#000;width:25px;text-align:center;">A</div>
<div class="t" style="left:90px;top:473.36px;font-size:11px;line-height:14px;color:#000;letter-spacing:0.25px;">22/06/2013</div>
<div class="t" style="left:168px;top:473.36px;font-size:11px;line-height:14px;color:#000;width:23px;text-align:right;">8</div>
<div class="t" style="left:193px;top:473.36px;font-size:11px;line-height:14px;color:#000;width:22px;text-align:right;">15</div>
<div class="t" style="left:220px;top:473.36px;font-size:11px;line-height:14px;color:#000;">VT</div>
<div class="t" style="left:264px;top:473.36px;font-size:11px;line-height:14px;color:#000;letter-spacing:-0.3px;"></div>
<div class="t" style="left:318px;top:473.36px;font-size:11px;line-height:14px;color:#000;letter-spacing:-0.3px;"></div>
<div class="t" style="left:353px;top:473.36px;font-size:11px;line-height:14px;color:#000;letter-spacing:-0.3px;"></div>
<div class="t" style="left:537px;top:473.36px;font-size:11px;line-height:14px;color:#000;"></div>
<div class="t" style="left:588px;top:473.36px;font-size:11px;line-height:14px;color:#000;letter-spacing:-0.55px;">FOIQV</div>
<div class="t" style="left:651px;top:473.36px;font-size:11px;line-height:14px;color:#000;letter-spacing:-0.2px;">AT72</div>
<div class="t" style="left:691px;top:473.36px;font-size:11px;line-height:14px;color:#000;width:49px;text-align:center;">08:22</div>
<div class="t" style="left:741px;top:473.36px;font-size:11px;line-height:14px;color:#000;width:34px;text-align:right;">0</div>
<div class="t" style="left:778px;top:473.36px;font-size:11px;line-height:14px;color:#000;width:42px;text-align:center;">16</div>
<div class="t" style="left:821px;top:473.36px;font-size:11px;line-height:14px;color:#000;width:44px;text-align:center;"></div>
<div class="t" style="left:863px;top:473.36px;font-size:11px;line-height:14px;color:#000;width:46px;text-align:right;letter-spacing:-0.1px;"></div>
<div style="left:22px;top:492px;width:12px;height:12px;background:#F8F7F0;border-top:1px solid #ACA899;border-left:1px solid #ACA899;border-right:1px solid #E6E3D6;border-bottom:1px solid #E6E3D6;box-sizing:border-box;"></div>
<svg style="position:absolute;left:25px;top:495px" width="7" height="7" shape-rendering="crispEdges" fill="#000"><rect x="6" y="0" width="1" height="1"/><rect x="5" y="1" width="2" height="1"/><rect x="0" y="2" width="1" height="1"/><rect x="4" y="2" width="3" height="1"/><rect x="0" y="3" width="2" height="1"/><rect x="3" y="3" width="3" height="1"/><rect x="0" y="4" width="5" height="1"/><rect x="1" y="5" width="3" height="1"/><rect x="2" y="6" width="1" height="1"/></svg>
<div style="left:44px;top:491px;width:14px;height:15px;background:#00CC00;"></div>
<div style="left:44px;top:506px;width:14px;height:1px;background:#000;"></div>
<svg style="position:absolute;left:44px;top:491px" width="14" height="15" viewBox="0 0 14 15"><polygon points="1.3,8.9 3.5,7.2 5.3,9.7 10.6,0 12,0 12,5.9 6,13.9 5,13.9" fill="#fff"/></svg>
<div class="t" style="left:62px;top:492.36px;font-size:11px;line-height:14px;color:#000;width:25px;text-align:center;">A</div>
<div class="t" style="left:90px;top:492.36px;font-size:11px;line-height:14px;color:#000;letter-spacing:0.25px;">22/06/2013</div>
<div class="t" style="left:168px;top:492.36px;font-size:11px;line-height:14px;color:#000;width:23px;text-align:right;">8</div>
<div class="t" style="left:193px;top:492.36px;font-size:11px;line-height:14px;color:#000;width:22px;text-align:right;">20</div>
<div class="t" style="left:220px;top:492.36px;font-size:11px;line-height:14px;color:#000;">VT</div>
<div class="t" style="left:264px;top:492.36px;font-size:11px;line-height:14px;color:#000;letter-spacing:-0.3px;"></div>
<div class="t" style="left:318px;top:492.36px;font-size:11px;line-height:14px;color:#000;letter-spacing:-0.3px;"></div>
<div class="t" style="left:353px;top:492.36px;font-size:11px;line-height:14px;color:#000;letter-spacing:-0.3px;"></div>
<div class="t" style="left:537px;top:492.36px;font-size:11px;line-height:14px;color:#000;"></div>
<div class="t" style="left:588px;top:492.36px;font-size:11px;line-height:14px;color:#000;letter-spacing:-0.55px;">FOHJS</div>
<div class="t" style="left:651px;top:492.36px;font-size:11px;line-height:14px;color:#000;letter-spacing:-0.2px;">AT72</div>
<div class="t" style="left:691px;top:492.36px;font-size:11px;line-height:14px;color:#000;width:49px;text-align:center;">08:28</div>
<div class="t" style="left:741px;top:492.36px;font-size:11px;line-height:14px;color:#000;width:34px;text-align:right;">0</div>
<div class="t" style="left:778px;top:492.36px;font-size:11px;line-height:14px;color:#000;width:42px;text-align:center;">66</div>
<div class="t" style="left:821px;top:492.36px;font-size:11px;line-height:14px;color:#000;width:44px;text-align:center;"></div>
<div class="t" style="left:863px;top:492.36px;font-size:11px;line-height:14px;color:#000;width:46px;text-align:right;letter-spacing:-0.1px;">110</div>
<div style="left:22px;top:511px;width:12px;height:12px;background:#F8F7F0;border-top:1px solid #ACA899;border-left:1px solid #ACA899;border-right:1px solid #E6E3D6;border-bottom:1px solid #E6E3D6;box-sizing:border-box;"></div>
<svg style="position:absolute;left:25px;top:514px" width="7" height="7" shape-rendering="crispEdges" fill="#000"><rect x="6" y="0" width="1" height="1"/><rect x="5" y="1" width="2" height="1"/><rect x="0" y="2" width="1" height="1"/><rect x="4" y="2" width="3" height="1"/><rect x="0" y="3" width="2" height="1"/><rect x="3" y="3" width="3" height="1"/><rect x="0" y="4" width="5" height="1"/><rect x="1" y="5" width="3" height="1"/><rect x="2" y="6" width="1" height="1"/></svg>
<div style="left:44px;top:510px;width:14px;height:15px;background:#00CC00;"></div>
<div style="left:44px;top:525px;width:14px;height:1px;background:#000;"></div>
<svg style="position:absolute;left:44px;top:510px" width="14" height="15" viewBox="0 0 14 15"><polygon points="1.3,8.9 3.5,7.2 5.3,9.7 10.6,0 12,0 12,5.9 6,13.9 5,13.9" fill="#fff"/></svg>
<div class="t" style="left:62px;top:511.36px;font-size:11px;line-height:14px;color:#000;width:25px;text-align:center;">D</div>
<div class="t" style="left:90px;top:511.36px;font-size:11px;line-height:14px;color:#000;letter-spacing:0.25px;">22/06/2013</div>
<div class="t" style="left:168px;top:511.36px;font-size:11px;line-height:14px;color:#000;width:23px;text-align:right;">8</div>
<div class="t" style="left:193px;top:511.36px;font-size:11px;line-height:14px;color:#000;width:22px;text-align:right;">30</div>
<div class="t" style="left:220px;top:511.36px;font-size:11px;line-height:14px;color:#000;">VT</div>
<div class="t" style="left:264px;top:511.36px;font-size:11px;line-height:14px;color:#000;letter-spacing:-0.3px;"></div>
<div class="t" style="left:318px;top:511.36px;font-size:11px;line-height:14px;color:#000;letter-spacing:-0.3px;"></div>
<div class="t" style="left:353px;top:511.36px;font-size:11px;line-height:14px;color:#000;letter-spacing:-0.3px;"></div>
<div class="t" style="left:537px;top:511.36px;font-size:11px;line-height:14px;color:#000;">TD</div>
<div class="t" style="left:588px;top:511.36px;font-size:11px;line-height:14px;color:#000;letter-spacing:-0.55px;">FOIQB</div>
<div class="t" style="left:651px;top:511.36px;font-size:11px;line-height:14px;color:#000;letter-spacing:-0.2px;">AT45</div>
<div class="t" style="left:691px;top:511.36px;font-size:11px;line-height:14px;color:#000;width:49px;text-align:center;">08:48</div>
<div class="t" style="left:741px;top:511.36px;font-size:11px;line-height:14px;color:#000;width:34px;text-align:right;">0</div>
<div class="t" style="left:778px;top:511.36px;font-size:11px;line-height:14px;color:#000;width:42px;text-align:center;">35</div>
<div class="t" style="left:821px;top:511.36px;font-size:11px;line-height:14px;color:#000;width:44px;text-align:center;"></div>
<div class="t" style="left:863px;top:511.36px;font-size:11px;line-height:14px;color:#000;width:46px;text-align:right;letter-spacing:-0.1px;">324</div>
<div style="left:22px;top:530px;width:12px;height:12px;background:#F8F7F0;border-top:1px solid #ACA899;border-left:1px solid #ACA899;border-right:1px solid #E6E3D6;border-bottom:1px solid #E6E3D6;box-sizing:border-box;"></div>
<svg style="position:absolute;left:25px;top:533px" width="7" height="7" shape-rendering="crispEdges" fill="#000"><rect x="6" y="0" width="1" height="1"/><rect x="5" y="1" width="2" height="1"/><rect x="0" y="2" width="1" height="1"/><rect x="4" y="2" width="3" height="1"/><rect x="0" y="3" width="2" height="1"/><rect x="3" y="3" width="3" height="1"/><rect x="0" y="4" width="5" height="1"/><rect x="1" y="5" width="3" height="1"/><rect x="2" y="6" width="1" height="1"/></svg>
<div style="left:44px;top:529px;width:14px;height:15px;background:#00CC00;"></div>
<div style="left:44px;top:544px;width:14px;height:1px;background:#000;"></div>
<svg style="position:absolute;left:44px;top:529px" width="14" height="15" viewBox="0 0 14 15"><polygon points="1.3,8.9 3.5,7.2 5.3,9.7 10.6,0 12,0 12,5.9 6,13.9 5,13.9" fill="#fff"/></svg>
<div class="t" style="left:62px;top:530.36px;font-size:11px;line-height:14px;color:#000;width:25px;text-align:center;">A</div>
<div class="t" style="left:90px;top:530.36px;font-size:11px;line-height:14px;color:#000;letter-spacing:0.25px;">22/06/2013</div>
<div class="t" style="left:168px;top:530.36px;font-size:11px;line-height:14px;color:#000;width:23px;text-align:right;">8</div>
<div class="t" style="left:193px;top:530.36px;font-size:11px;line-height:14px;color:#000;width:22px;text-align:right;">30</div>
<div class="t" style="left:220px;top:530.36px;font-size:11px;line-height:14px;color:#000;">VT</div>
<div class="t" style="left:264px;top:530.36px;font-size:11px;line-height:14px;color:#000;letter-spacing:-0.3px;"></div>
<div class="t" style="left:318px;top:530.36px;font-size:11px;line-height:14px;color:#000;letter-spacing:-0.3px;"></div>
<div class="t" style="left:353px;top:530.36px;font-size:11px;line-height:14px;color:#000;letter-spacing:-0.3px;"></div>
<div class="t" style="left:537px;top:530.36px;font-size:11px;line-height:14px;color:#000;"></div>
<div class="t" style="left:588px;top:530.36px;font-size:11px;line-height:14px;color:#000;letter-spacing:-0.55px;">FOIQT</div>
<div class="t" style="left:651px;top:530.36px;font-size:11px;line-height:14px;color:#000;letter-spacing:-0.2px;">AT72</div>
<div class="t" style="left:691px;top:530.36px;font-size:11px;line-height:14px;color:#000;width:49px;text-align:center;">08:33</div>
<div class="t" style="left:741px;top:530.36px;font-size:11px;line-height:14px;color:#000;width:34px;text-align:right;">0</div>
<div class="t" style="left:778px;top:530.36px;font-size:11px;line-height:14px;color:#000;width:42px;text-align:center;">47</div>
<div class="t" style="left:821px;top:530.36px;font-size:11px;line-height:14px;color:#000;width:44px;text-align:center;"></div>
<div class="t" style="left:863px;top:530.36px;font-size:11px;line-height:14px;color:#000;width:46px;text-align:right;letter-spacing:-0.1px;"></div>
<div style="left:22px;top:549px;width:12px;height:12px;background:#F8F7F0;border-top:1px solid #ACA899;border-left:1px solid #ACA899;border-right:1px solid #E6E3D6;border-bottom:1px solid #E6E3D6;box-sizing:border-box;"></div>
<svg style="position:absolute;left:25px;top:552px" width="7" height="7" shape-rendering="crispEdges" fill="#000"><rect x="6" y="0" width="1" height="1"/><rect x="5" y="1" width="2" height="1"/><rect x="0" y="2" width="1" height="1"/><rect x="4" y="2" width="3" height="1"/><rect x="0" y="3" width="2" height="1"/><rect x="3" y="3" width="3" height="1"/><rect x="0" y="4" width="5" height="1"/><rect x="1" y="5" width="3" height="1"/><rect x="2" y="6" width="1" height="1"/></svg>
<div style="left:44px;top:548px;width:14px;height:15px;background:#00CC00;"></div>
<div style="left:44px;top:563px;width:14px;height:1px;background:#000;"></div>
<svg style="position:absolute;left:44px;top:548px" width="14" height="15" viewBox="0 0 14 15"><polygon points="1.3,8.9 3.5,7.2 5.3,9.7 10.6,0 12,0 12,5.9 6,13.9 5,13.9" fill="#fff"/></svg>
<div class="t" style="left:62px;top:549.36px;font-size:11px;line-height:14px;color:#000;width:25px;text-align:center;">A</div>
<div class="t" style="left:90px;top:549.36px;font-size:11px;line-height:14px;color:#000;letter-spacing:0.25px;">22/06/2013</div>
<div class="t" style="left:168px;top:549.36px;font-size:11px;line-height:14px;color:#000;width:23px;text-align:right;">8</div>
<div class="t" style="left:193px;top:549.36px;font-size:11px;line-height:14px;color:#000;width:22px;text-align:right;">33</div>
<div class="t" style="left:220px;top:549.36px;font-size:11px;line-height:14px;color:#000;">AA</div>
<div class="t" style="left:264px;top:549.36px;font-size:11px;line-height:14px;color:#000;letter-spacing:-0.3px;"></div>
<div class="t" style="left:318px;top:549.36px;font-size:11px;line-height:14px;color:#000;letter-spacing:-0.3px;"></div>
<div class="t" style="left:353px;top:549.36px;font-size:11px;line-height:14px;color:#000;letter-spacing:-0.3px;"></div>
<div class="t" style="left:537px;top:549.36px;font-size:11px;line-height:14px;color:#000;"></div>
<div class="t" style="left:588px;top:549.36px;font-size:11px;line-height:14px;color:#000;letter-spacing:-0.55px;">FOIQM</div>
<div class="t" style="left:651px;top:549.36px;font-size:11px;line-height:14px;color:#000;letter-spacing:-0.2px;">BE20</div>
<div class="t" style="left:691px;top:549.36px;font-size:11px;line-height:14px;color:#000;width:49px;text-align:center;">08:35</div>
<div class="t" style="left:741px;top:549.36px;font-size:11px;line-height:14px;color:#000;width:34px;text-align:right;">0</div>
<div class="t" style="left:778px;top:549.36px;font-size:11px;line-height:14px;color:#000;width:42px;text-align:center;">7</div>
<div class="t" style="left:821px;top:549.36px;font-size:11px;line-height:14px;color:#000;width:44px;text-align:center;"></div>
<div class="t" style="left:863px;top:549.36px;font-size:11px;line-height:14px;color:#000;width:46px;text-align:right;letter-spacing:-0.1px;"></div>
<div style="left:22px;top:568px;width:12px;height:12px;background:#F8F7F0;border-top:1px solid #ACA899;border-left:1px solid #ACA899;border-right:1px solid #E6E3D6;border-bottom:1px solid #E6E3D6;box-sizing:border-box;"></div>
<svg style="position:absolute;left:25px;top:571px" width="7" height="7" shape-rendering="crispEdges" fill="#000"><rect x="6" y="0" width="1" height="1"/><rect x="5" y="1" width="2" height="1"/><rect x="0" y="2" width="1" height="1"/><rect x="4" y="2" width="3" height="1"/><rect x="0" y="3" width="2" height="1"/><rect x="3" y="3" width="3" height="1"/><rect x="0" y="4" width="5" height="1"/><rect x="1" y="5" width="3" height="1"/><rect x="2" y="6" width="1" height="1"/></svg>
<div style="left:44px;top:567px;width:14px;height:15px;background:#00CC00;"></div>
<div style="left:44px;top:582px;width:14px;height:1px;background:#000;"></div>
<div style="left:44px;top:567px;width:14px;height:15px;background:#00EA10;"></div>
<svg style="position:absolute;left:49px;top:568px" width="5" height="12" shape-rendering="crispEdges" fill="#B00010"><rect x="2" y="0" width="1" height="1"/><rect x="1" y="1" width="3" height="1"/><rect x="0" y="2" width="1" height="1"/><rect x="2" y="2" width="1" height="1"/><rect x="4" y="2" width="1" height="1"/><rect x="0" y="3" width="1" height="1"/><rect x="2" y="3" width="1" height="1"/><rect x="0" y="4" width="3" height="1"/><rect x="0" y="5" width="4" height="1"/><rect x="1" y="6" width="4" height="1"/><rect x="2" y="7" width="3" height="1"/><rect x="2" y="8" width="1" height="1"/><rect x="4" y="8" width="1" height="1"/><rect x="0" y="9" width="1" height="1"/><rect x="2" y="9" width="1" height="1"/><rect x="4" y="9" width="1" height="1"/><rect x="1" y="10" width="3" height="1"/><rect x="2" y="11" width="1" height="1"/></svg>
<div class="t" style="left:62px;top:568.36px;font-size:11px;line-height:14px;color:#000;width:25px;text-align:center;">A</div>
<div class="t" style="left:90px;top:568.36px;font-size:11px;line-height:14px;color:#000;letter-spacing:0.25px;">22/06/2013</div>
<div class="t" style="left:168px;top:568.36px;font-size:11px;line-height:14px;color:#000;width:23px;text-align:right;">8</div>
<div class="t" style="left:193px;top:568.36px;font-size:11px;line-height:14px;color:#000;width:22px;text-align:right;">35</div>
<div class="t" style="left:220px;top:568.36px;font-size:11px;line-height:14px;color:#000;">TN</div>
<div class="t" style="left:264px;top:568.36px;font-size:11px;line-height:14px;color:#000;letter-spacing:-0.3px;"></div>
<div class="t" style="left:318px;top:568.36px;font-size:11px;line-height:14px;color:#000;letter-spacing:-0.3px;"></div>
<div class="t" style="left:353px;top:568.36px;font-size:11px;line-height:14px;color:#000;letter-spacing:-0.3px;"></div>
<div class="t" style="left:537px;top:568.36px;font-size:11px;line-height:14px;color:#000;">T1</div>
<div class="t" style="left:588px;top:568.36px;font-size:11px;line-height:14px;color:#000;letter-spacing:-0.55px;">FOLOV</div>
<div class="t" style="left:651px;top:568.36px;font-size:11px;line-height:14px;color:#000;letter-spacing:-0.2px;">A340</div>
<div class="t" style="left:691px;top:568.36px;font-size:11px;line-height:14px;color:#000;width:49px;text-align:center;">08:37</div>
<div class="t" style="left:741px;top:568.36px;font-size:11px;line-height:14px;color:#000;width:34px;text-align:right;">0</div>
<div class="t" style="left:778px;top:568.36px;font-size:11px;line-height:14px;color:#000;width:42px;text-align:center;">211</div>
<div class="t" style="left:821px;top:568.36px;font-size:11px;line-height:14px;color:#000;width:44px;text-align:center;"></div>
<div class="t" style="left:863px;top:568.36px;font-size:11px;line-height:14px;color:#000;width:46px;text-align:right;letter-spacing:-0.1px;">890</div>
<div style="left:22px;top:587px;width:12px;height:12px;background:#F8F7F0;border-top:1px solid #ACA899;border-left:1px solid #ACA899;border-right:1px solid #E6E3D6;border-bottom:1px solid #E6E3D6;box-sizing:border-box;"></div>
<svg style="position:absolute;left:25px;top:590px" width="7" height="7" shape-rendering="crispEdges" fill="#000"><rect x="6" y="0" width="1" height="1"/><rect x="5" y="1" width="2" height="1"/><rect x="0" y="2" width="1" height="1"/><rect x="4" y="2" width="3" height="1"/><rect x="0" y="3" width="2" height="1"/><rect x="3" y="3" width="3" height="1"/><rect x="0" y="4" width="5" height="1"/><rect x="1" y="5" width="3" height="1"/><rect x="2" y="6" width="1" height="1"/></svg>
<div style="left:44px;top:586px;width:14px;height:15px;background:#00CC00;"></div>
<div style="left:44px;top:601px;width:14px;height:1px;background:#000;"></div>
<svg style="position:absolute;left:44px;top:586px" width="14" height="15" viewBox="0 0 14 15"><polygon points="1.3,8.9 3.5,7.2 5.3,9.7 10.6,0 12,0 12,5.9 6,13.9 5,13.9" fill="#fff"/></svg>
<div class="t" style="left:62px;top:587.36px;font-size:11px;line-height:14px;color:#000;width:25px;text-align:center;">D</div>
<div class="t" style="left:90px;top:587.36px;font-size:11px;line-height:14px;color:#000;letter-spacing:0.25px;">22/06/2013</div>
<div class="t" style="left:168px;top:587.36px;font-size:11px;line-height:14px;color:#000;width:23px;text-align:right;">8</div>
<div class="t" style="left:193px;top:587.36px;font-size:11px;line-height:14px;color:#000;width:22px;text-align:right;">35</div>
<div class="t" style="left:220px;top:587.36px;font-size:11px;line-height:14px;color:#000;">VT</div>
<div class="t" style="left:264px;top:587.36px;font-size:11px;line-height:14px;color:#000;letter-spacing:-0.3px;">311</div>
<div class="t" style="left:318px;top:587.36px;font-size:11px;line-height:14px;color:#000;letter-spacing:-0.3px;">PPT</div>
<div class="t" style="left:353px;top:587.36px;font-size:11px;line-height:14px;color:#000;letter-spacing:-0.3px;">TAHITI (FAAA)</div>
<div class="t" style="left:537px;top:587.36px;font-size:11px;line-height:14px;color:#000;"></div>
<div class="t" style="left:588px;top:587.36px;font-size:11px;line-height:14px;color:#000;letter-spacing:-0.55px;">FOIQV</div>
<div class="t" style="left:651px;top:587.36px;font-size:11px;line-height:14px;color:#000;letter-spacing:-0.2px;">AT72</div>
<div class="t" style="left:691px;top:587.36px;font-size:11px;line-height:14px;color:#000;width:49px;text-align:center;">08:38</div>
<div class="t" style="left:741px;top:587.36px;font-size:11px;line-height:14px;color:#000;width:34px;text-align:right;">0</div>
<div class="t" style="left:778px;top:587.36px;font-size:11px;line-height:14px;color:#000;width:42px;text-align:center;">59</div>
<div class="t" style="left:821px;top:587.36px;font-size:11px;line-height:14px;color:#000;width:44px;text-align:center;">4</div>
<div class="t" style="left:863px;top:587.36px;font-size:11px;line-height:14px;color:#000;width:46px;text-align:right;letter-spacing:-0.1px;"></div>
<div style="left:22px;top:606px;width:12px;height:12px;background:#F8F7F0;border-top:1px solid #ACA899;border-left:1px solid #ACA899;border-right:1px solid #E6E3D6;border-bottom:1px solid #E6E3D6;box-sizing:border-box;"></div>
<svg style="position:absolute;left:25px;top:609px" width="7" height="7" shape-rendering="crispEdges" fill="#000"><rect x="6" y="0" width="1" height="1"/><rect x="5" y="1" width="2" height="1"/><rect x="0" y="2" width="1" height="1"/><rect x="4" y="2" width="3" height="1"/><rect x="0" y="3" width="2" height="1"/><rect x="3" y="3" width="3" height="1"/><rect x="0" y="4" width="5" height="1"/><rect x="1" y="5" width="3" height="1"/><rect x="2" y="6" width="1" height="1"/></svg>
<div style="left:44px;top:605px;width:14px;height:15px;background:#00CC00;"></div>
<div style="left:44px;top:620px;width:14px;height:1px;background:#000;"></div>
<svg style="position:absolute;left:44px;top:605px" width="14" height="15" viewBox="0 0 14 15"><polygon points="1.3,8.9 3.5,7.2 5.3,9.7 10.6,0 12,0 12,5.9 6,13.9 5,13.9" fill="#fff"/></svg>
<div class="t" style="left:62px;top:606.36px;font-size:11px;line-height:14px;color:#000;width:25px;text-align:center;">A</div>
<div class="t" style="left:90px;top:606.36px;font-size:11px;line-height:14px;color:#000;letter-spacing:0.25px;">22/06/2013</div>
<div class="t" style="left:168px;top:606.36px;font-size:11px;line-height:14px;color:#000;width:23px;text-align:right;">8</div>
<div class="t" style="left:193px;top:606.36px;font-size:11px;line-height:14px;color:#000;width:22px;text-align:right;">39</div>
<div class="t" style="left:220px;top:606.36px;font-size:11px;line-height:14px;color:#000;">AA</div>
<div class="t" style="left:264px;top:606.36px;font-size:11px;line-height:14px;color:#000;letter-spacing:-0.3px;">CHARTEF</div>
<div class="t" style="left:318px;top:606.36px;font-size:11px;line-height:14px;color:#000;letter-spacing:-0.3px;">PPT</div>
<div class="t" style="left:353px;top:606.36px;font-size:11px;line-height:14px;color:#000;letter-spacing:-0.3px;">TAHITI (FAAA)</div>
<div class="t" style="left:537px;top:606.36px;font-size:11px;line-height:14px;color:#000;"></div>
<div class="t" style="left:588px;top:606.36px;font-size:11px;line-height:14px;color:#000;letter-spacing:-0.55px;">FOIQL</div>
<div class="t" style="left:651px;top:606.36px;font-size:11px;line-height:14px;color:#000;letter-spacing:-0.2px;">BE20</div>
<div class="t" style="left:691px;top:606.36px;font-size:11px;line-height:14px;color:#000;width:49px;text-align:center;">08:40</div>
<div class="t" style="left:741px;top:606.36px;font-size:11px;line-height:14px;color:#000;width:34px;text-align:right;">0</div>
<div class="t" style="left:778px;top:606.36px;font-size:11px;line-height:14px;color:#000;width:42px;text-align:center;">7</div>
<div class="t" style="left:821px;top:606.36px;font-size:11px;line-height:14px;color:#000;width:44px;text-align:center;"></div>
<div class="t" style="left:863px;top:606.36px;font-size:11px;line-height:14px;color:#000;width:46px;text-align:right;letter-spacing:-0.1px;"></div>
<div style="left:22px;top:625px;width:12px;height:12px;background:#F8F7F0;border-top:1px solid #ACA899;border-left:1px solid #ACA899;border-right:1px solid #E6E3D6;border-bottom:1px solid #E6E3D6;box-sizing:border-box;"></div>
<svg style="position:absolute;left:25px;top:628px" width="7" height="7" shape-rendering="crispEdges" fill="#000"><rect x="6" y="0" width="1" height="1"/><rect x="5" y="1" width="2" height="1"/><rect x="0" y="2" width="1" height="1"/><rect x="4" y="2" width="3" height="1"/><rect x="0" y="3" width="2" height="1"/><rect x="3" y="3" width="3" height="1"/><rect x="0" y="4" width="5" height="1"/><rect x="1" y="5" width="3" height="1"/><rect x="2" y="6" width="1" height="1"/></svg>
<div style="left:44px;top:624px;width:14px;height:15px;background:#00CC00;"></div>
<div style="left:44px;top:639px;width:14px;height:1px;background:#000;"></div>
<svg style="position:absolute;left:44px;top:624px" width="14" height="15" viewBox="0 0 14 15"><polygon points="1.3,8.9 3.5,7.2 5.3,9.7 10.6,0 12,0 12,5.9 6,13.9 5,13.9" fill="#fff"/></svg>
<div class="t" style="left:62px;top:625.36px;font-size:11px;line-height:14px;color:#000;width:25px;text-align:center;">D</div>
<div class="t" style="left:90px;top:625.36px;font-size:11px;line-height:14px;color:#000;letter-spacing:0.25px;">22/06/2013</div>
<div class="t" style="left:168px;top:625.36px;font-size:11px;line-height:14px;color:#000;width:23px;text-align:right;">8</div>
<div class="t" style="left:193px;top:625.36px;font-size:11px;line-height:14px;color:#000;width:22px;text-align:right;">50</div>
<div class="t" style="left:220px;top:625.36px;font-size:11px;line-height:14px;color:#000;">VT</div>
<div class="t" style="left:264px;top:625.36px;font-size:11px;line-height:14px;color:#000;letter-spacing:-0.3px;">374</div>
<div class="t" style="left:318px;top:625.36px;font-size:11px;line-height:14px;color:#000;letter-spacing:-0.3px;">PPT</div>
<div class="t" style="left:353px;top:625.36px;font-size:11px;line-height:14px;color:#000;letter-spacing:-0.3px;">TAHITI (FAAA)</div>
<div class="t" style="left:537px;top:625.36px;font-size:11px;line-height:14px;color:#000;"></div>
<div class="t" style="left:588px;top:625.36px;font-size:11px;line-height:14px;color:#000;letter-spacing:-0.55px;">FOIQT</div>
<div class="t" style="left:651px;top:625.36px;font-size:11px;line-height:14px;color:#000;letter-spacing:-0.2px;">AT72</div>
<div class="t" style="left:691px;top:625.36px;font-size:11px;line-height:14px;color:#000;width:49px;text-align:center;">08:47</div>
<div class="t" style="left:741px;top:625.36px;font-size:11px;line-height:14px;color:#000;width:34px;text-align:right;">0</div>
<div class="t" style="left:778px;top:625.36px;font-size:11px;line-height:14px;color:#000;width:42px;text-align:center;">32</div>
<div class="t" style="left:821px;top:625.36px;font-size:11px;line-height:14px;color:#000;width:44px;text-align:center;">7</div>
<div class="t" style="left:863px;top:625.36px;font-size:11px;line-height:14px;color:#000;width:46px;text-align:right;letter-spacing:-0.1px;">13</div>
<div style="left:22px;top:644px;width:12px;height:12px;background:#F8F7F0;border-top:1px solid #ACA899;border-left:1px solid #ACA899;border-right:1px solid #E6E3D6;border-bottom:1px solid #E6E3D6;box-sizing:border-box;"></div>
<svg style="position:absolute;left:25px;top:647px" width="7" height="7" shape-rendering="crispEdges" fill="#000"><rect x="6" y="0" width="1" height="1"/><rect x="5" y="1" width="2" height="1"/><rect x="0" y="2" width="1" height="1"/><rect x="4" y="2" width="3" height="1"/><rect x="0" y="3" width="2" height="1"/><rect x="3" y="3" width="3" height="1"/><rect x="0" y="4" width="5" height="1"/><rect x="1" y="5" width="3" height="1"/><rect x="2" y="6" width="1" height="1"/></svg>
<div style="left:44px;top:643px;width:14px;height:15px;background:#00CC00;"></div>
<div style="left:44px;top:658px;width:14px;height:1px;background:#000;"></div>
<svg style="position:absolute;left:44px;top:643px" width="14" height="15" viewBox="0 0 14 15"><polygon points="1.3,8.9 3.5,7.2 5.3,9.7 10.6,0 12,0 12,5.9 6,13.9 5,13.9" fill="#fff"/></svg>
<div class="t" style="left:62px;top:644.36px;font-size:11px;line-height:14px;color:#000;width:25px;text-align:center;">D</div>
<div class="t" style="left:90px;top:644.36px;font-size:11px;line-height:14px;color:#000;letter-spacing:0.25px;">22/06/2013</div>
<div class="t" style="left:168px;top:644.36px;font-size:11px;line-height:14px;color:#000;width:23px;text-align:right;">8</div>
<div class="t" style="left:193px;top:644.36px;font-size:11px;line-height:14px;color:#000;width:22px;text-align:right;">50</div>
<div class="t" style="left:220px;top:644.36px;font-size:11px;line-height:14px;color:#000;">VT</div>
<div class="t" style="left:264px;top:644.36px;font-size:11px;line-height:14px;color:#000;letter-spacing:-0.3px;">0416</div>
<div class="t" style="left:318px;top:644.36px;font-size:11px;line-height:14px;color:#000;letter-spacing:-0.3px;">PPT</div>
<div class="t" style="left:353px;top:644.36px;font-size:11px;line-height:14px;color:#000;letter-spacing:-0.3px;">TAHITI (FAAA)</div>
<div class="t" style="left:537px;top:644.36px;font-size:11px;line-height:14px;color:#000;"></div>
<div class="t" style="left:588px;top:644.36px;font-size:11px;line-height:14px;color:#000;letter-spacing:-0.55px;">FOHJS</div>
<div class="t" style="left:651px;top:644.36px;font-size:11px;line-height:14px;color:#000;letter-spacing:-0.2px;">AT72</div>
<div class="t" style="left:691px;top:644.36px;font-size:11px;line-height:14px;color:#000;width:49px;text-align:center;">08:47</div>
<div class="t" style="left:741px;top:644.36px;font-size:11px;line-height:14px;color:#000;width:34px;text-align:right;">0</div>
<div class="t" style="left:778px;top:644.36px;font-size:11px;line-height:14px;color:#000;width:42px;text-align:center;">36</div>
<div class="t" style="left:821px;top:644.36px;font-size:11px;line-height:14px;color:#000;width:44px;text-align:center;"></div>
<div class="t" style="left:863px;top:644.36px;font-size:11px;line-height:14px;color:#000;width:46px;text-align:right;letter-spacing:-0.1px;">4</div>
<div style="left:22px;top:663px;width:12px;height:12px;background:#F8F7F0;border-top:1px solid #ACA899;border-left:1px solid #ACA899;border-right:1px solid #E6E3D6;border-bottom:1px solid #E6E3D6;box-sizing:border-box;"></div>
<svg style="position:absolute;left:25px;top:666px" width="7" height="7" shape-rendering="crispEdges" fill="#000"><rect x="6" y="0" width="1" height="1"/><rect x="5" y="1" width="2" height="1"/><rect x="0" y="2" width="1" height="1"/><rect x="4" y="2" width="3" height="1"/><rect x="0" y="3" width="2" height="1"/><rect x="3" y="3" width="3" height="1"/><rect x="0" y="4" width="5" height="1"/><rect x="1" y="5" width="3" height="1"/><rect x="2" y="6" width="1" height="1"/></svg>
<div style="left:44px;top:662px;width:14px;height:15px;background:#00CC00;"></div>
<div style="left:44px;top:677px;width:14px;height:1px;background:#000;"></div>
<svg style="position:absolute;left:44px;top:662px" width="14" height="15" viewBox="0 0 14 15"><polygon points="1.3,8.9 3.5,7.2 5.3,9.7 10.6,0 12,0 12,5.9 6,13.9 5,13.9" fill="#fff"/></svg>
<div class="t" style="left:62px;top:663.36px;font-size:11px;line-height:14px;color:#000;width:25px;text-align:center;">D</div>
<div class="t" style="left:90px;top:663.36px;font-size:11px;line-height:14px;color:#000;letter-spacing:0.25px;">22/06/2013</div>
<div class="t" style="left:168px;top:663.36px;font-size:11px;line-height:14px;color:#000;width:23px;text-align:right;">9</div>
<div class="t" style="left:193px;top:663.36px;font-size:11px;line-height:14px;color:#000;width:22px;text-align:right;">17</div>
<div class="t" style="left:220px;top:663.36px;font-size:11px;line-height:14px;color:#000;">AA</div>
<div class="t" style="left:264px;top:663.36px;font-size:11px;line-height:14px;color:#000;letter-spacing:-0.3px;">CHARTEF</div>
<div class="t" style="left:318px;top:663.36px;font-size:11px;line-height:14px;color:#000;letter-spacing:-0.3px;">PPT</div>
<div class="t" style="left:353px;top:663.36px;font-size:11px;line-height:14px;color:#000;letter-spacing:-0.3px;">TAHITI (FAAA)</div>
<div class="t" style="left:537px;top:663.36px;font-size:11px;line-height:14px;color:#000;"></div>
<div class="t" style="left:588px;top:663.36px;font-size:11px;line-height:14px;color:#000;letter-spacing:-0.55px;">FOIQM</div>
<div class="t" style="left:651px;top:663.36px;font-size:11px;line-height:14px;color:#000;letter-spacing:-0.2px;">BE20</div>
<div class="t" style="left:691px;top:663.36px;font-size:11px;line-height:14px;color:#000;width:49px;text-align:center;">09:15</div>
<div class="t" style="left:741px;top:663.36px;font-size:11px;line-height:14px;color:#000;width:34px;text-align:right;">0</div>
<div class="t" style="left:778px;top:663.36px;font-size:11px;line-height:14px;color:#000;width:42px;text-align:center;">0</div>
<div class="t" style="left:821px;top:663.36px;font-size:11px;line-height:14px;color:#000;width:44px;text-align:center;"></div>
<div class="t" style="left:863px;top:663.36px;font-size:11px;line-height:14px;color:#000;width:46px;text-align:right;letter-spacing:-0.1px;"></div>
<div style="left:22px;top:682px;width:12px;height:12px;background:#F8F7F0;border-top:1px solid #ACA899;border-left:1px solid #ACA899;border-right:1px solid #E6E3D6;border-bottom:1px solid #E6E3D6;box-sizing:border-box;"></div>
<svg style="position:absolute;left:25px;top:685px" width="7" height="7" shape-rendering="crispEdges" fill="#000"><rect x="6" y="0" width="1" height="1"/><rect x="5" y="1" width="2" height="1"/><rect x="0" y="2" width="1" height="1"/><rect x="4" y="2" width="3" height="1"/><rect x="0" y="3" width="2" height="1"/><rect x="3" y="3" width="3" height="1"/><rect x="0" y="4" width="5" height="1"/><rect x="1" y="5" width="3" height="1"/><rect x="2" y="6" width="1" height="1"/></svg>
<div style="left:44px;top:681px;width:14px;height:15px;background:#00CC00;"></div>
<div style="left:44px;top:696px;width:14px;height:1px;background:#000;"></div>
<svg style="position:absolute;left:44px;top:681px" width="14" height="15" viewBox="0 0 14 15"><polygon points="1.3,8.9 3.5,7.2 5.3,9.7 10.6,0 12,0 12,5.9 6,13.9 5,13.9" fill="#fff"/></svg>
<div class="t" style="left:62px;top:682.36px;font-size:11px;line-height:14px;color:#000;width:25px;text-align:center;">A</div>
<div class="t" style="left:90px;top:682.36px;font-size:11px;line-height:14px;color:#000;letter-spacing:0.25px;">22/06/2013</div>
<div class="t" style="left:168px;top:682.36px;font-size:11px;line-height:14px;color:#000;width:23px;text-align:right;">9</div>
<div class="t" style="left:193px;top:682.36px;font-size:11px;line-height:14px;color:#000;width:22px;text-align:right;">20</div>
<div class="t" style="left:220px;top:682.36px;font-size:11px;line-height:14px;color:#000;">VT</div>
<div class="t" style="left:264px;top:682.36px;font-size:11px;line-height:14px;color:#000;letter-spacing:-0.3px;">311</div>
<div class="t" style="left:318px;top:682.36px;font-size:11px;line-height:14px;color:#000;letter-spacing:-0.3px;">HUH</div>
<div class="t" style="left:353px;top:682.36px;font-size:11px;line-height:14px;color:#000;letter-spacing:-0.3px;">HUAHINE</div>
<div class="t" style="left:537px;top:682.36px;font-size:11px;line-height:14px;color:#000;">TD</div>
<div class="t" style="left:588px;top:682.36px;font-size:11px;line-height:14px;color:#000;letter-spacing:-0.55px;">FOIQV</div>
<div class="t" style="left:651px;top:682.36px;font-size:11px;line-height:14px;color:#000;letter-spacing:-0.2px;">AT72</div>
<div class="t" style="left:691px;top:682.36px;font-size:11px;line-height:14px;color:#000;width:49px;text-align:center;">09:19</div>
<div class="t" style="left:741px;top:682.36px;font-size:11px;line-height:14px;color:#000;width:34px;text-align:right;">0</div>
<div class="t" style="left:778px;top:682.36px;font-size:11px;line-height:14px;color:#000;width:42px;text-align:center;">63</div>
<div class="t" style="left:821px;top:682.36px;font-size:11px;line-height:14px;color:#000;width:44px;text-align:center;"></div>
<div class="t" style="left:863px;top:682.36px;font-size:11px;line-height:14px;color:#000;width:46px;text-align:right;letter-spacing:-0.1px;">11</div>
<div style="left:22px;top:701px;width:12px;height:12px;background:#F8F7F0;border-top:1px solid #ACA899;border-left:1px solid #ACA899;border-right:1px solid #E6E3D6;border-bottom:1px solid #E6E3D6;box-sizing:border-box;"></div>
<svg style="position:absolute;left:25px;top:704px" width="7" height="7" shape-rendering="crispEdges" fill="#000"><rect x="6" y="0" width="1" height="1"/><rect x="5" y="1" width="2" height="1"/><rect x="0" y="2" width="1" height="1"/><rect x="4" y="2" width="3" height="1"/><rect x="0" y="3" width="2" height="1"/><rect x="3" y="3" width="3" height="1"/><rect x="0" y="4" width="5" height="1"/><rect x="1" y="5" width="3" height="1"/><rect x="2" y="6" width="1" height="1"/></svg>
<div style="left:44px;top:700px;width:14px;height:15px;background:#00CC00;"></div>
<div style="left:44px;top:715px;width:14px;height:1px;background:#000;"></div>
<svg style="position:absolute;left:44px;top:700px" width="14" height="15" viewBox="0 0 14 15"><polygon points="1.3,8.9 3.5,7.2 5.3,9.7 10.6,0 12,0 12,5.9 6,13.9 5,13.9" fill="#fff"/></svg>
<div class="t" style="left:62px;top:701.36px;font-size:11px;line-height:14px;color:#000;width:25px;text-align:center;">A</div>
<div class="t" style="left:90px;top:701.36px;font-size:11px;line-height:14px;color:#000;letter-spacing:0.25px;">22/06/2013</div>
<div class="t" style="left:168px;top:701.36px;font-size:11px;line-height:14px;color:#000;width:23px;text-align:right;">9</div>
<div class="t" style="left:193px;top:701.36px;font-size:11px;line-height:14px;color:#000;width:22px;text-align:right;">30</div>
<div class="t" style="left:220px;top:701.36px;font-size:11px;line-height:14px;color:#000;">VT</div>
<div class="t" style="left:264px;top:701.36px;font-size:11px;line-height:14px;color:#000;letter-spacing:-0.3px;">416</div>
<div class="t" style="left:318px;top:701.36px;font-size:11px;line-height:14px;color:#000;letter-spacing:-0.3px;">BOB</div>
<div class="t" style="left:353px;top:701.36px;font-size:11px;line-height:14px;color:#000;letter-spacing:-0.3px;">BORA BORA</div>
<div class="t" style="left:537px;top:701.36px;font-size:11px;line-height:14px;color:#000;">TD</div>
<div class="t" style="left:588px;top:701.36px;font-size:11px;line-height:14px;color:#000;letter-spacing:-0.55px;">FOHJS</div>
<div class="t" style="left:651px;top:701.36px;font-size:11px;line-height:14px;color:#000;letter-spacing:-0.2px;">AT72</div>
<div class="t" style="left:691px;top:701.36px;font-size:11px;line-height:14px;color:#000;width:49px;text-align:center;">09:33</div>
<div class="t" style="left:741px;top:701.36px;font-size:11px;line-height:14px;color:#000;width:34px;text-align:right;">0</div>
<div class="t" style="left:778px;top:701.36px;font-size:11px;line-height:14px;color:#000;width:42px;text-align:center;">36</div>
<div class="t" style="left:821px;top:701.36px;font-size:11px;line-height:14px;color:#000;width:44px;text-align:center;"></div>
<div class="t" style="left:863px;top:701.36px;font-size:11px;line-height:14px;color:#000;width:46px;text-align:right;letter-spacing:-0.1px;">4</div>
<svg style="position:absolute;left:10px;top:362px" width="5" height="9" shape-rendering="crispEdges" fill="#000"><rect x="0" y="0" width="1" height="1"/><rect x="1" y="1" width="1" height="1"/><rect x="0" y="2" width="1" height="1"/><rect x="2" y="2" width="1" height="1"/><rect x="0" y="3" width="2" height="1"/><rect x="3" y="3" width="1" height="1"/><rect x="0" y="4" width="3" height="1"/><rect x="4" y="4" width="1" height="1"/><rect x="0" y="5" width="2" height="1"/><rect x="3" y="5" width="1" height="1"/><rect x="0" y="6" width="1" height="1"/><rect x="2" y="6" width="1" height="1"/><rect x="1" y="7" width="1" height="1"/><rect x="0" y="8" width="1" height="1"/></svg>
<div style="left:5px;top:711px;width:911px;height:1px;background:#ACA899;"></div>
<svg style="position:absolute;left:9px;top:191px" width="6" height="9" shape-rendering="crispEdges" fill="#000"><rect x="0" y="0" width="1" height="1"/><rect x="2" y="0" width="4" height="1"/><rect x="2" y="2" width="4" height="1"/><rect x="0" y="4" width="1" height="1"/><rect x="2" y="4" width="4" height="1"/><rect x="2" y="6" width="4" height="1"/><rect x="0" y="8" width="1" height="1"/><rect x="2" y="8" width="4" height="1"/></svg>
<div class="t" style="left:22px;top:189.36px;font-size:11px;line-height:14px;color:#000;">Ok</div>
<svg style="position:absolute;left:46px;top:187px" width="12" height="17" viewBox="0 0 12 17"><polygon points="1,10 3.2,8.6 4.8,11.2 9.3,1 10.6,1.6 5.6,16 4.4,16" fill="#000" stroke="#18E018" stroke-width="0.9"/></svg>
<div class="t" style="left:65px;top:189.36px;font-size:11px;line-height:14px;color:#000;">AD</div>
<div class="t" style="left:88px;top:189.36px;font-size:11px;line-height:14px;color:#000;width:79px;text-align:center;letter-spacing:-0.3px;">Prévu le (LOC)</div>
<div class="t" style="left:168px;top:189.36px;font-size:11px;line-height:14px;color:#000;width:24px;text-align:center;">H</div>
<div class="t" style="left:193px;top:189.36px;font-size:11px;line-height:14px;color:#000;width:24px;text-align:center;">mn</div>
<div class="t" style="left:221px;top:189.36px;font-size:11px;line-height:14px;color:#000;">Vol</div>
<div class="t" style="left:264px;top:189.36px;font-size:11px;line-height:14px;color:#000;">No</div>
<div class="t" style="left:319px;top:189.36px;font-size:11px;line-height:14px;color:#000;letter-spacing:-0.3px;">IATA</div>
<div class="t" style="left:353px;top:189.36px;font-size:11px;line-height:14px;color:#000;letter-spacing:-0.3px;">Aéroport de ...</div>
<div class="t" style="left:535px;top:189.36px;font-size:11px;line-height:14px;color:#000;width:49px;text-align:center;letter-spacing:-0.2px;">Terminal</div>
<div class="t" style="left:586px;top:189.36px;font-size:11px;line-height:14px;color:#000;width:62px;text-align:center;letter-spacing:-0.2px;">Immat</div>
<div class="t" style="left:653px;top:189.36px;font-size:11px;line-height:14px;color:#000;letter-spacing:-0.1px;">Type</div>
<div class="t" style="left:694px;top:189.36px;font-size:11px;line-height:14px;color:#000;letter-spacing:-0.2px;width:45px;overflow:hidden;white-space:nowrap;">H.Bloc (L</div>
<div class="t" style="left:741px;top:189.36px;font-size:11px;line-height:14px;color:#000;width:36px;text-align:center;letter-spacing:-0.2px;">Stairs</div>
<div class="t" style="left:778px;top:189.36px;font-size:11px;line-height:14px;color:#000;width:42px;text-align:center;">Pax</div>
<div class="t" style="left:821px;top:189.36px;font-size:11px;line-height:14px;color:#000;width:41px;text-align:center;letter-spacing:-0.2px;">Transit</div>
<div class="t" style="left:866px;top:189.36px;font-size:11px;line-height:14px;color:#000;letter-spacing:-0.3px;">Fret (Kg)</div>
<div style="left:5px;top:711px;width:911px;height:1px;background:#ACA899;"></div>
<div style="left:5px;top:712px;width:911px;height:22px;background:#ECE9D8;"></div>
<div style="left:6px;top:713px;width:910px;height:1px;background:#fff;"></div>
<div style="left:17px;top:713px;width:1px;height:21px;background:#ACA899;"></div>
<div style="left:18px;top:713px;width:1px;height:21px;background:#fff;"></div>
<div style="left:779px;top:714px;width:39px;height:19px;background:#C9C5F5;border-top:1px solid #ACA899;border-left:1px solid #ACA899;border-right:1px solid #fff;border-bottom:1px solid #fff;box-sizing:border-box;"></div>
<div class="t" style="left:779px;top:717.36px;font-size:11px;line-height:14px;color:#000;width:37px;text-align:right;letter-spacing:-0.1px;">5166</div>
<div style="left:821px;top:714px;width:40px;height:19px;background:#C9C5F5;border-top:1px solid #ACA899;border-left:1px solid #ACA899;border-right:1px solid #fff;border-bottom:1px solid #fff;box-sizing:border-box;"></div>
<div class="t" style="left:821px;top:717.36px;font-size:11px;line-height:14px;color:#000;width:38px;text-align:right;letter-spacing:-0.1px;">81</div>
<div style="left:864px;top:714px;width:46px;height:19px;background:#FBF7A9;border-top:1px solid #ACA899;border-left:1px solid #ACA899;border-right:1px solid #fff;border-bottom:1px solid #fff;box-sizing:border-box;"></div>
<div class="t" style="left:864px;top:717.36px;font-size:11px;line-height:14px;color:#000;width:44px;text-align:right;letter-spacing:-0.1px;">37 136</div>
<div style="left:5px;top:734px;width:911px;height:1px;background:#ACA899;"></div>
<div style="left:5px;top:735px;width:911px;height:16px;background:repeating-conic-gradient(#FFFFFF 0% 25%, #ECE9D8 0% 50%) 0 0/2px 2px;"></div>
<div style="left:5px;top:735px;width:18px;height:16px;background:#ECE9D8;border-top:1px solid #fff;border-left:1px solid #fff;border-right:1px solid #ACA899;box-sizing:border-box;"></div>
<svg style="position:absolute;left:12px;top:740px" width="4" height="7" shape-rendering="crispEdges" fill="#000"><rect x="3" y="0" width="1" height="1"/><rect x="2" y="1" width="2" height="1"/><rect x="1" y="2" width="3" height="1"/><rect x="0" y="3" width="4" height="1"/><rect x="1" y="4" width="3" height="1"/><rect x="2" y="5" width="2" height="1"/><rect x="3" y="6" width="1" height="1"/></svg>
<div style="left:23px;top:735px;width:663px;height:16px;background:#ECE9D8;border-top:1px solid #fff;border-left:1px solid #fff;border-right:1px solid #ACA899;box-sizing:border-box;"></div>
<div style="left:900px;top:735px;width:16px;height:16px;background:#ECE9D8;border-top:1px solid #fff;border-left:1px solid #fff;border-right:1px solid #ACA899;box-sizing:border-box;"></div>
<svg style="position:absolute;left:905px;top:740px" width="4" height="7" shape-rendering="crispEdges" fill="#000"><rect x="0" y="0" width="1" height="1"/><rect x="0" y="1" width="2" height="1"/><rect x="0" y="2" width="3" height="1"/><rect x="0" y="3" width="4" height="1"/><rect x="0" y="4" width="3" height="1"/><rect x="0" y="5" width="2" height="1"/><rect x="0" y="6" width="1" height="1"/></svg>
<div style="left:916px;top:151px;width:18px;height:583px;background:repeating-conic-gradient(#FFFFFF 0% 25%, #ECE9D8 0% 50%) 0 0/2px 2px;"></div>
<div style="left:933px;top:151px;width:1px;height:600px;background:#FFFFFF;"></div>
<div style="left:916px;top:151px;width:17px;height:17px;background:#ECE9D8;border-top:1px solid #fff;border-left:1px solid #fff;border-bottom:1px solid #ACA899;border-right:1px solid #ACA899;box-sizing:border-box;"></div>
<svg style="position:absolute;left:921px;top:158px" width="7" height="4" shape-rendering="crispEdges" fill="#000"><rect x="3" y="0" width="1" height="1"/><rect x="2" y="1" width="3" height="1"/><rect x="1" y="2" width="5" height="1"/><rect x="0" y="3" width="7" height="1"/></svg>
<div style="left:916px;top:168px;width:17px;height:154px;background:#ECE9D8;border-top:1px solid #fff;border-left:1px solid #fff;border-bottom:1px solid #ACA899;border-right:1px solid #ACA899;box-sizing:border-box;"></div>
<div style="left:916px;top:718px;width:17px;height:16px;background:#ECE9D8;border-top:1px solid #fff;border-left:1px solid #fff;border-bottom:1px solid #ACA899;border-right:1px solid #ACA899;box-sizing:border-box;"></div>
<svg style="position:absolute;left:921px;top:725px" width="7" height="4" shape-rendering="crispEdges" fill="#000"><rect x="0" y="0" width="7" height="1"/><rect x="1" y="1" width="5" height="1"/><rect x="2" y="2" width="3" height="1"/><rect x="3" y="3" width="1" height="1"/></svg>
<div style="left:916px;top:734px;width:18px;height:17px;background:#ECE9D8;"></div>
<div style="left:934px;top:150px;width:2px;height:601px;background:#A6A394;"></div>
<div style="left:936px;top:150px;width:221px;height:601px;background:#FFFBF0;"></div>
<div style="left:934px;top:150px;width:223px;height:2px;background:#A6A394;"></div>
<div style="left:945px;top:163px;width:21px;height:13px;background:#fff;"></div>
<div class="t" style="left:951px;top:161.53px;font-size:12px;line-height:15px;color:#0A0A80;font-weight:700;">D</div>
<div class="t" style="left:976px;top:162.36px;font-size:11px;line-height:14px;color:#000;">No de vol</div>
<div class="t" style="left:1033px;top:162.53px;font-size:12px;line-height:15px;color:#0A0A80;font-weight:700;letter-spacing:0.1px;">VT&nbsp;&nbsp;416</div>
<div style="left:943px;top:184px;width:176px;height:1px;background:#fff;"></div>
<div style="left:943px;top:184px;width:1px;height:8px;background:#fff;"></div>
<div style="left:1119px;top:183px;width:1px;height:9px;background:#ACA899;"></div>
<svg style="position:absolute;left:940px;top:188px" width="185" height="24" viewBox="0 0 185 24"><defs><linearGradient id="tg" x1="0" y1="0" x2="0" y2="1"><stop offset="0" stop-color="#FBFAF6"/><stop offset="1" stop-color="#DAD7CB"/></linearGradient></defs><path d="M7.5 21.5 L25 5.5 Q26.5 3.5 29 3.5 L73 3.5 Q75 3.5 76 5.5 L62 21.5 Z" fill="url(#tg)" stroke="#2B5DC1"/><path d="M3 21.5 H7.5 M62 21.5 L78 5.5 Q79.5 3.5 82 3.5 L138 3.5 Q141.5 3.5 141.5 7 V21.5 H180" fill="none" stroke="#2B5DC1"/></svg>
<div class="t" style="left:967px;top:195.36px;font-size:11px;line-height:14px;color:#000;">GMT</div>
<div class="t" style="left:1022px;top:195.36px;font-size:11px;line-height:14px;color:#000;letter-spacing:-0.2px;">Local time</div>
<div class="t" style="left:960px;top:225.36px;font-size:11px;line-height:14px;color:#000;letter-spacing:-0.2px;">Planned date</div>
<div class="t" style="left:1000px;top:240.36px;font-size:11px;line-height:14px;color:#000;letter-spacing:-0.2px;">Time</div>
<div class="t" style="left:1034px;top:224.53px;font-size:12px;line-height:15px;color:#0A0A80;font-weight:700;letter-spacing:0.6px;">22/06/201</div>
<div class="t" style="left:1034px;top:239.53px;font-size:12px;line-height:15px;color:#0A0A80;font-weight:700;letter-spacing:0.4px;">07:30</div>
<div class="t" style="left:1152px;top:211.36px;font-size:11px;line-height:14px;color:#000;">S</div>
<div class="t" style="left:1131px;top:235.36px;font-size:11px;line-height:14px;color:#000;">Charg</div>
<div class="t" style="left:952px;top:270.36px;font-size:11px;line-height:14px;color:#000;letter-spacing:-0.2px;">Bloc time</div>
<div class="t" style="left:1032px;top:270.36px;font-size:11px;line-height:14px;color:#000;letter-spacing:-0.2px;">Bloc date</div>
<div style="left:952px;top:286px;width:23px;height:19px;background:#fff;border:1px solid #ACA899;box-sizing:border-box;"></div>
<div class="t" style="left:952px;top:288.86px;font-size:11px;line-height:14px;color:#000;width:20px;text-align:right;">7</div>
<div class="t" style="left:977px;top:290.36px;font-size:11px;line-height:14px;color:#000;">:</div>
<div style="left:984px;top:286px;width:23px;height:19px;background:#fff;border:1px solid #ACA899;box-sizing:border-box;"></div>
<div class="t" style="left:984px;top:288.86px;font-size:11px;line-height:14px;color:#000;width:20px;text-align:right;">41</div>
<div style="left:1032px;top:286px;width:71px;height:19px;background:#fff;border:1px solid #ACA899;box-sizing:border-box;"></div>
<div class="t" style="left:1035px;top:288.86px;font-size:11px;line-height:14px;color:#000;letter-spacing:0.2px;">22/06/2013</div>
<div class="t" style="left:1119px;top:307.36px;font-size:11px;line-height:14px;color:#000;">Code DI</div>
<div class="t" style="left:952px;top:318.36px;font-size:11px;line-height:14px;color:#000;letter-spacing:-0.3px;">Runway time</div>
<div class="t" style="left:1032px;top:318.36px;font-size:11px;line-height:14px;color:#000;letter-spacing:-0.2px;">Date</div>
<div style="left:952px;top:334px;width:23px;height:19px;background:#fff;border:1px solid #ACA899;box-sizing:border-box;"></div>
<div class="t" style="left:952px;top:336.86px;font-size:11px;line-height:14px;color:#000;width:20px;text-align:right;">7</div>
<div class="t" style="left:977px;top:338.36px;font-size:11px;line-height:14px;color:#000;">:</div>
<div style="left:984px;top:334px;width:23px;height:19px;background:#fff;border:1px solid #ACA899;box-sizing:border-box;"></div>
<div class="t" style="left:984px;top:336.86px;font-size:11px;line-height:14px;color:#000;width:20px;text-align:right;">44</div>
<div style="left:1032px;top:334px;width:71px;height:19px;background:#fff;border:1px solid #ACA899;box-sizing:border-box;"></div>
<div class="t" style="left:1035px;top:336.86px;font-size:11px;line-height:14px;color:#000;letter-spacing:0.2px;">22/06/2013</div>
<div class="t" style="left:1147px;top:331.36px;font-size:11px;line-height:14px;color:#000;">DI</div>
<div class="t" style="left:1147px;top:355.36px;font-size:11px;line-height:14px;color:#000;">DI</div>
<div style="left:1119px;top:384px;width:1px;height:48px;background:#ACA899;"></div>
<div style="left:943px;top:431px;width:177px;height:1px;background:#ACA899;"></div>
<div style="left:943px;top:432px;width:177px;height:1px;background:#fff;"></div>
<div style="left:943px;top:384px;width:1px;height:47px;background:#fff;"></div>
<div style="left:943px;top:384px;width:176px;height:1px;background:#fff;"></div>
<div class="t" style="left:954px;top:388.36px;font-size:11px;line-height:14px;color:#000;">Piste</div>
<div class="t" style="left:1010px;top:388.36px;font-size:11px;line-height:14px;color:#000;letter-spacing:-0.2px;">Balisage</div>
<div class="t" style="left:1066px;top:388.36px;font-size:11px;line-height:14px;color:#000;letter-spacing:-0.2px;">Parking</div>
<div style="left:952px;top:408px;width:39px;height:19px;background:#fff;border:1px solid #ACA899;box-sizing:border-box;"></div>
<div style="left:974px;top:410px;width:15px;height:15px;background:#ECE9D8;"></div>
<svg style="position:absolute;left:978px;top:416px" width="8" height="5"><path d="M0 0 H7 L3.5 4 Z" fill="#000"/></svg>
<div class="t" style="left:954px;top:410.36px;font-size:11px;line-height:14px;color:#000;">A</div>
<div style="left:1008px;top:408px;width:39px;height:19px;background:#fff;border:1px solid #ACA899;box-sizing:border-box;"></div>
<div style="left:1030px;top:410px;width:15px;height:15px;background:#ECE9D8;"></div>
<svg style="position:absolute;left:1034px;top:416px" width="8" height="5"><path d="M0 0 H7 L3.5 4 Z" fill="#000"/></svg>
<div class="t" style="left:1010px;top:410.36px;font-size:11px;line-height:14px;color:#000;">0</div>
<div style="left:1064px;top:408px;width:47px;height:19px;background:#fff;border:1px solid #ACA899;box-sizing:border-box;"></div>
<div style="left:1094px;top:410px;width:15px;height:15px;background:#ECE9D8;"></div>
<svg style="position:absolute;left:1098px;top:416px" width="8" height="5"><path d="M0 0 H7 L3.5 4 Z" fill="#000"/></svg>
<div class="t" style="left:1066px;top:410.36px;font-size:11px;line-height:14px;color:#000;">PPT</div>
<div class="t" style="left:1119px;top:410.36px;font-size:11px;line-height:14px;color:#000;">, Nb d'h</div>
<div style="left:938px;top:439px;width:219px;height:20px;background:#ECE9D8;"></div>
<div class="t" style="left:1080px;top:439.71px;font-size:16px;line-height:20px;color:#10108A;font-weight:700;letter-spacing:0.1px;"><u>E</u>scales</div>
<div style="left:936px;top:464px;width:221px;height:19px;background:#101010;"></div>
<div style="left:937px;top:465px;width:37px;height:17px;background:#ECE9D8;"></div>
<div class="t" style="left:937px;top:467.36px;font-size:11px;line-height:14px;color:#000;width:37px;text-align:center;letter-spacing:-0.2px;">IATA</div>
<div style="left:975px;top:465px;width:65px;height:17px;background:#ECE9D8;"></div>
<div class="t" style="left:975px;top:467.36px;font-size:11px;line-height:14px;color:#000;width:65px;text-align:center;letter-spacing:-0.2px;">Aéroport</div>
<div style="left:1041px;top:465px;width:43px;height:17px;background:#C8E0EA;"></div>
<div class="t" style="left:1044px;top:467.36px;font-size:11px;line-height:14px;color:#000;letter-spacing:-0.2px;">Pax</div>
<div style="left:1085px;top:465px;width:44px;height:17px;background:#C8E0EA;"></div>
<div class="t" style="left:1085px;top:467.36px;font-size:11px;line-height:14px;color:#000;width:44px;text-align:center;letter-spacing:-0.2px;">Transits</div>
<div style="left:1130px;top:465px;width:27px;height:17px;background:#FBF7A9;"></div>
<div class="t" style="left:1143px;top:467.36px;font-size:11px;line-height:14px;color:#000;letter-spacing:-0.2px;">Fret</div>
<div style="left:936px;top:483px;width:221px;height:75px;background:#fff;"></div>
<div class="t" style="left:1044px;top:512.86px;font-size:11px;line-height:14px;color:#ACA899;letter-spacing:-0.3px;">&lt;No data to display&gt;</div>
<div style="left:936px;top:557px;width:221px;height:1px;background:#ACA899;"></div>
<div style="left:936px;top:558px;width:221px;height:24px;background:#ECE9D8;"></div>
<div style="left:1043px;top:560px;width:40px;height:19px;background:#C8E0EA;border-top:1px solid #ACA899;border-left:1px solid #ACA899;border-right:1px solid #fff;border-bottom:1px solid #fff;box-sizing:border-box;"></div>
<div style="left:1088px;top:560px;width:40px;height:19px;background:#C8E0EA;border-top:1px solid #ACA899;border-left:1px solid #ACA899;border-right:1px solid #fff;border-bottom:1px solid #fff;box-sizing:border-box;"></div>
<div style="left:1132px;top:560px;width:25px;height:19px;background:#FBF7A9;border-top:1px solid #ACA899;border-left:1px solid #ACA899;border-right:1px solid #fff;border-bottom:1px solid #fff;box-sizing:border-box;"></div>
<div style="left:936px;top:581px;width:221px;height:2px;background:#8F8C80;"></div>
<div style="left:936px;top:583px;width:221px;height:1px;background:#ECE9D8;"></div>
<div style="left:936px;top:584px;width:221px;height:19px;background:#101010;"></div>
<div style="left:937px;top:585px;width:10px;height:17px;background:#ECE9D8;"></div>
<div style="left:948px;top:585px;width:63px;height:17px;background:#ECE9D8;"></div>
<div style="left:1012px;top:585px;width:19px;height:17px;background:#ECE9D8;"></div>
<div style="left:1032px;top:585px;width:50px;height:17px;background:#ECE9D8;"></div>
<div style="left:1083px;top:585px;width:20px;height:17px;background:#ECE9D8;"></div>
<div style="left:1104px;top:585px;width:53px;height:17px;background:#fff;"></div>
<svg style="position:absolute;left:939px;top:589px" width="6" height="11" shape-rendering="crispEdges" fill="#000"><rect x="0" y="0" width="1" height="1"/><rect x="2" y="0" width="4" height="1"/><rect x="2" y="2" width="4" height="1"/><rect x="0" y="4" width="1" height="1"/><rect x="2" y="4" width="4" height="1"/><rect x="2" y="6" width="4" height="1"/><rect x="0" y="8" width="1" height="1"/><rect x="2" y="8" width="4" height="1"/><rect x="2" y="10" width="4" height="1"/></svg>
<div class="t" style="left:950px;top:587.36px;font-size:11px;line-height:14px;color:#000;letter-spacing:-0.2px;">Heure</div>
<div class="t" style="left:1014px;top:587.36px;font-size:11px;line-height:14px;color:#000;">AD</div>
<div class="t" style="left:1032px;top:587.36px;font-size:11px;line-height:14px;color:#000;width:50px;text-align:center;">SMI</div>
<div class="t" style="left:1085px;top:587.36px;font-size:11px;line-height:14px;color:#000;">Vol</div>
<div style="left:936px;top:603px;width:221px;height:14px;background:#fff;"></div>
<div class="t" style="left:1067px;top:603.36px;font-size:11px;line-height:14px;color:#ACA899;letter-spacing:-0.3px;">&lt;No data to display</div>
<div style="left:936px;top:617px;width:221px;height:17px;background:#101010;"></div>
<div style="left:937px;top:618px;width:16px;height:15px;background:#ECE9D8;"></div>
<div style="left:954px;top:618px;width:203px;height:15px;background:#ECE9D8;"></div>
<svg style="position:absolute;left:942px;top:621px" width="5" height="9" shape-rendering="crispEdges" fill="#000"><rect x="4" y="0" width="1" height="1"/><rect x="3" y="1" width="2" height="1"/><rect x="2" y="2" width="3" height="1"/><rect x="1" y="3" width="4" height="1"/><rect x="0" y="4" width="5" height="1"/><rect x="1" y="5" width="4" height="1"/><rect x="2" y="6" width="3" height="1"/><rect x="3" y="7" width="2" height="1"/><rect x="4" y="8" width="1" height="1"/></svg>
<div style="left:936px;top:634px;width:221px;height:2px;background:#ECE9D8;"></div>
<div style="left:936px;top:636px;width:221px;height:17px;background:#ECE9D8;"></div>
<div style="left:936px;top:636px;width:221px;height:1px;background:#fff;"></div>
<div style="left:936px;top:652px;width:221px;height:1px;background:#ACA899;"></div>
<div style="left:1016px;top:638px;width:1px;height:14px;background:#ACA899;"></div>
<div style="left:1017px;top:638px;width:1px;height:14px;background:#fff;"></div>
<div class="t" style="left:944px;top:638.86px;font-size:11px;line-height:14px;color:#000;letter-spacing:-0.1px;">Time</div>
<div class="t" style="left:1023px;top:638.86px;font-size:11px;line-height:14px;color:#000;letter-spacing:-0.1px;">Event</div>
<div style="left:936px;top:653px;width:221px;height:80px;background:#fff;"></div>
<div style="left:936px;top:733px;width:221px;height:18px;background:linear-gradient(to bottom,#FEFEFB,#F3F1E6);"></div>
<div style="left:938px;top:734px;width:15px;height:15px;background:linear-gradient(to bottom,#D2DEFB,#B5C9F4);border:1px solid #FFFFFF;border-radius:2px;box-sizing:border-box;"></div>
<svg style="position:absolute;left:942px;top:737px" width="5" height="7" shape-rendering="crispEdges" fill="#4D6185"><rect x="3" y="0" width="2" height="1"/><rect x="2" y="1" width="2" height="1"/><rect x="1" y="2" width="2" height="1"/><rect x="0" y="3" width="2" height="1"/><rect x="1" y="4" width="2" height="1"/><rect x="2" y="5" width="2" height="1"/><rect x="3" y="6" width="2" height="1"/></svg>
<div style="left:955px;top:734px;width:202px;height:15px;background:linear-gradient(to bottom,#D0DDFC,#B8CCF6);border:1px solid #FFFFFF;border-radius:2px;box-sizing:border-box;"></div>
<div style="left:1101px;top:739px;width:1px;height:6px;background:#FFFFFF;"></div>
<div style="left:1102px;top:739px;width:1px;height:6px;background:#8DA6D8;"></div>
<div style="left:1103px;top:739px;width:1px;height:6px;background:#FFFFFF;"></div>
<div style="left:1104px;top:739px;width:1px;height:6px;background:#8DA6D8;"></div>
<div style="left:1105px;top:739px;width:1px;height:6px;background:#FFFFFF;"></div>
<div style="left:1106px;top:739px;width:1px;height:6px;background:#8DA6D8;"></div>
<div style="left:1107px;top:739px;width:1px;height:6px;background:#FFFFFF;"></div>
<div style="left:1108px;top:739px;width:1px;height:6px;background:#8DA6D8;"></div>
<div style="left:235px;top:370px;width:227px;height:220px;background:#fff;border:1px solid #A8A596;box-sizing:border-box;box-shadow:3px 3px 3px -1px rgba(0,0,0,0.45);"></div>
<div style="left:238px;top:390px;width:221px;height:17px;background:#316AC5;"></div>
<div class="t" style="left:254px;top:373.36px;font-size:11px;line-height:14px;color:#000;letter-spacing:0.05px;">Modifier ce vol</div>
<div class="t" style="left:254px;top:391.36px;font-size:11px;line-height:14px;color:#fff;letter-spacing:0.05px;">Valider le vol</div>
<div class="t" style="left:254px;top:407.36px;font-size:11px;line-height:14px;color:#000;letter-spacing:0.05px;">Dé-valider ce vol</div>
<div class="t" style="left:254px;top:425.36px;font-size:11px;line-height:14px;color:#000;letter-spacing:0.05px;">Regroupement AD en une rotation</div>
<div class="t" style="left:254px;top:451.36px;font-size:11px;line-height:14px;color:#000;letter-spacing:0.05px;">FIDS - Information de vol</div>
<div class="t" style="left:254px;top:467.36px;font-size:11px;line-height:14px;color:#000;letter-spacing:0.05px;">CNL - Vol annulé</div>
<div class="t" style="left:254px;top:485.36px;font-size:11px;line-height:14px;color:#000;letter-spacing:0.05px;">Horaire estimé&#8230; Expected time</div>
<div class="t" style="left:254px;top:501.36px;font-size:11px;line-height:14px;color:#000;letter-spacing:0.05px;">Effacer information de vol</div>
<div class="t" style="left:254px;top:527.36px;font-size:11px;line-height:14px;color:#000;letter-spacing:0.05px;">Infos de vol (Hall, portes, etc&#8230;)</div>
<div class="t" style="left:254px;top:553.36px;font-size:11px;line-height:14px;color:#000;letter-spacing:0.05px;">Tout développer</div>
<div class="t" style="left:254px;top:571.36px;font-size:11px;line-height:14px;color:#000;letter-spacing:0.05px;">Tout réduire</div>
<div class="t" style="left:427px;top:391.36px;font-size:11px;line-height:14px;color:#fff;">F3</div>
<div style="left:240px;top:444px;width:217px;height:1px;background:#ACA899;"></div>
<div style="left:240px;top:521px;width:217px;height:1px;background:#ACA899;"></div>
<div style="left:240px;top:547px;width:217px;height:1px;background:#ACA899;"></div>
</body></html>
